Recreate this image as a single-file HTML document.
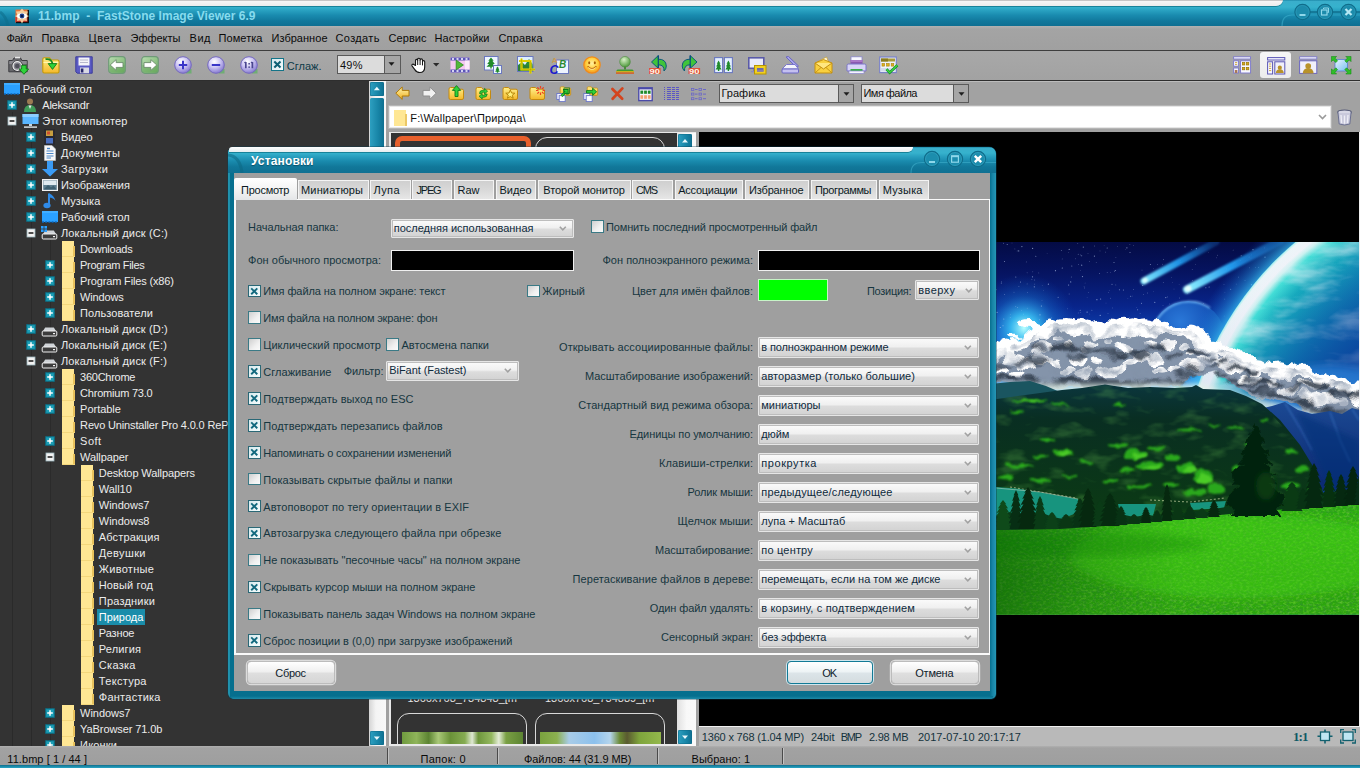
<!DOCTYPE html>
<html lang="ru"><head><meta charset="utf-8"><title>FastStone Image Viewer</title><style>
html,body{margin:0;padding:0}
body{width:1360px;height:768px;overflow:hidden;position:relative;background:#a0a0a0;font-family:'Liberation Sans',sans-serif;font-size:11px}
.t{position:absolute;white-space:pre;line-height:14px;height:14px}
</style></head><body>
<div style="position:absolute;left:0px;top:0px;width:1360px;height:26px;background:linear-gradient(to bottom,#1b86a6 0,#3aaecb 1.2px,#36b2cd 7px,#2aa3c2 10px,#1a8cb0 15px,#11789c 21px,#0f6f92 26px);"></div>
<svg style="position:absolute;left:1270px;top:0px;" width="90" height="26" viewBox="0 0 90 26"><path d="M90 15 H22 Q12 15 12 26" fill="none" stroke="#3fb2cf" stroke-opacity=".55" stroke-width="1.2"/><path d="M90 12 H26" stroke="#0c6482" stroke-opacity=".6" stroke-width="2" fill="none"/></svg>
<div style="position:absolute;left:0px;top:0px;width:1283px;height:6px;background:linear-gradient(to bottom,#c6c6c6 0,#c6c6c6 1px,#f6f6f6 1px,#ececec 100%);border-bottom-right-radius:7px 6px;box-shadow:0 .8px 0 #0e7388;"></div>
<svg style="position:absolute;left:0px;top:6px;" width="30" height="20" viewBox="0 0 30 20"><path d="M0 6 Q6 10 8 20" fill="none" stroke="#0d6e8c" stroke-opacity=".6" stroke-width="3"/></svg>
<svg style="position:absolute;left:14px;top:8px;" width="16" height="16" viewBox="0 0 16 16"><rect x="1.5" y="1.5" width="13" height="13" fill="#e8743a"/><rect x="1.5" y="9" width="13" height="5.5" fill="#d8382a"/><rect x="13.5" y="2" width="1.5" height="13" fill="#111"/><rect x="2" y="13.8" width="13" height="1.4" fill="#111"/><path d="M8 0.5 L10.2 3.3 L14 3.5 L12.6 7 L15 8 L12.6 9.6 L13 13 L9.8 12.6 L8 15.5 L6.2 12.6 L3 13 L3.4 9.6 L1 8 L3.4 7 L2 3.5 L5.8 3.3 Z" fill="#f6d9a8" fill-opacity=".9"/><ellipse cx="8" cy="8" rx="5" ry="2.8" fill="#fff"/><circle cx="8" cy="8" r="2.4" fill="#1d3f8c"/><circle cx="8" cy="8" r="1" fill="#061030"/></svg>
<span class="t" style="left:38.00px;top:8.64px;font-size:12px;color:#86dbee;letter-spacing:0.027px;font-weight:bold;">11.bmp  -  FastStone Image Viewer 6.9</span>
<svg style="position:absolute;left:1290px;top:0px;" width="70" height="26" viewBox="0 0 70 26"><circle cx="12.5" cy="12" r="7.6" fill="#1c8bab" stroke="#0f6c8a" stroke-width="1.2"/><circle cx="12.5" cy="12" r="6.6" fill="none" stroke="#3aaac8" stroke-opacity=".5" stroke-width=".8"/><rect x="9.5" y="14" width="6" height="2" fill="#8fd8ea"/><circle cx="35" cy="12" r="7.6" fill="#1c8bab" stroke="#0f6c8a" stroke-width="1.2"/><circle cx="35" cy="12" r="6.6" fill="none" stroke="#3aaac8" stroke-opacity=".5" stroke-width=".8"/><rect x="31.5" y="10" width="5.5" height="5" fill="none" stroke="#8fd8ea" stroke-width="1.2"/><path d="M33.5 9 V8 H38.5 V12.5 H37.5" fill="none" stroke="#8fd8ea" stroke-width="1"/><circle cx="58.5" cy="12" r="7.6" fill="#1c8bab" stroke="#0f6c8a" stroke-width="1.2"/><circle cx="58.5" cy="12" r="6.6" fill="none" stroke="#3aaac8" stroke-opacity=".5" stroke-width=".8"/><path d="M55.5 9 L61.5 15 M61.5 9 L55.5 15" stroke="#b6e8f4" stroke-width="2.2" fill="none"/></svg>
<div style="position:absolute;left:0px;top:26px;width:1360px;height:23.5px;background:linear-gradient(to bottom,#b2b2b2 0,#a4a4a4 3px,#a0a0a0 100%);"></div>
<span class="t" style="left:6.50px;top:30.89px;font-size:11px;color:#0a0a0a;letter-spacing:-0.349px;">Файл</span>
<span class="t" style="left:41.50px;top:30.89px;font-size:11px;color:#0a0a0a;letter-spacing:0.166px;">Правка</span>
<span class="t" style="left:88.50px;top:30.89px;font-size:11px;color:#0a0a0a;letter-spacing:0.586px;">Цвета</span>
<span class="t" style="left:130.50px;top:30.89px;font-size:11px;color:#0a0a0a;">Эффекты</span>
<span class="t" style="left:189.50px;top:30.89px;font-size:11px;color:#0a0a0a;letter-spacing:0.547px;">Вид</span>
<span class="t" style="left:218.50px;top:30.89px;font-size:11px;color:#0a0a0a;letter-spacing:0.073px;">Пометка</span>
<span class="t" style="left:271.50px;top:30.89px;font-size:11px;color:#0a0a0a;letter-spacing:0.031px;">Избранное</span>
<span class="t" style="left:335.50px;top:30.89px;font-size:11px;color:#0a0a0a;letter-spacing:0.365px;">Создать</span>
<span class="t" style="left:388.50px;top:30.89px;font-size:11px;color:#0a0a0a;letter-spacing:0.066px;">Сервис</span>
<span class="t" style="left:434.50px;top:30.89px;font-size:11px;color:#0a0a0a;letter-spacing:0.133px;">Настройки</span>
<span class="t" style="left:498.50px;top:30.89px;font-size:11px;color:#0a0a0a;letter-spacing:0.141px;">Справка</span>
<div style="position:absolute;left:0px;top:49.5px;width:1360px;height:1.2px;background:#3e3e3e;"></div>
<div style="position:absolute;left:0px;top:50.7px;width:1360px;height:29px;background:linear-gradient(to bottom,#a8a8a8 0,#a2a2a2 100%);"></div>
<div style="position:absolute;left:0px;top:79.5px;width:1360px;height:1.2px;background:#2e2e2e;"></div>
<div style="position:absolute;left:386px;top:80.7px;width:974px;height:1px;background:#bcbcbc;"></div>
<div style="position:absolute;left:0;top:80.7px;width:369px;height:665px;background:#333333;overflow:hidden"><div style="position:absolute;left:0;top:-80.7px"><div style="position:absolute;left:11.5px;top:112px;width:1px;height:640px;background:#2a2a2a;"></div><div style="position:absolute;left:30.5px;top:128px;width:1px;height:640px;background:#2a2a2a;"></div><div style="position:absolute;left:49.5px;top:240px;width:1px;height:520px;background:#2b2b2b;"></div><svg style="position:absolute;left:3.5px;top:83px;" width="16" height="13" viewBox="0 0 16 13"><rect x="0" y="0" width="16" height="11" fill="#2aa0ff"/><rect x="0" y="0" width="16" height="2" fill="#41adff"/><path d="M0 11 H16" stroke="#0d69c0" stroke-width="1.4" stroke-dasharray="2 1.2"/></svg><span class="t" style="left:22.80px;top:82.19px;font-size:11px;color:#ececec;">Рабочий стол</span><svg style="position:absolute;left:6.5px;top:100px;" width="10" height="10" viewBox="0 0 10 10"><rect x=".5" y=".5" width="9" height="9" fill="#14879f" stroke="#0c6b80" stroke-width="1" stroke-dasharray="2 1"/><rect x="1.5" y="1.5" width="7" height="7" fill="#1aa0b8"/><path d="M2.2 5 H7.8 M5 2.2 V7.8" stroke="#fff" stroke-width="1.5"/></svg><svg style="position:absolute;left:23px;top:97px;" width="14" height="16" viewBox="0 0 14 16"><circle cx="7" cy="4.5" r="3" fill="#9b7a52"/><path d="M1 15 Q1 8 7 8 Q13 8 13 15 Z" fill="#3f9c5a"/><path d="M5.5 8.5 L7 12 L8.5 8.5Z" fill="#e8e8e8"/></svg><span class="t" style="left:42.30px;top:98.19px;font-size:11px;color:#ececec;letter-spacing:-0.240px;">Aleksandr</span><svg style="position:absolute;left:6.5px;top:116px;" width="10" height="10" viewBox="0 0 10 10"><rect x="1" y="1" width="8" height="8" fill="#f2f2f2" stroke="#9fb9c0" stroke-width=".8"/><path d="M2.6 5 H7.4" stroke="#222" stroke-width="1.6"/></svg><svg style="position:absolute;left:22px;top:113px;" width="17" height="16" viewBox="0 0 17 16"><rect x="0.5" y="1" width="16" height="10" fill="#5ab6ff"/><rect x="0.5" y="1" width="16" height="3" fill="#8ccdff"/><rect x="7" y="11" width="3" height="2" fill="#c8d4dc"/><rect x="2" y="13.4" width="13" height="1.4" fill="#dfe6ea"/></svg><span class="t" style="left:42.30px;top:114.19px;font-size:11px;color:#ececec;letter-spacing:0.226px;">Этот компьютер</span><svg style="position:absolute;left:25.5px;top:132px;" width="10" height="10" viewBox="0 0 10 10"><rect x=".5" y=".5" width="9" height="9" fill="#14879f" stroke="#0c6b80" stroke-width="1" stroke-dasharray="2 1"/><rect x="1.5" y="1.5" width="7" height="7" fill="#1aa0b8"/><path d="M2.2 5 H7.8 M5 2.2 V7.8" stroke="#fff" stroke-width="1.5"/></svg><svg style="position:absolute;left:44px;top:129px;" width="11" height="16" viewBox="0 0 11 16"><rect x="0" y="0" width="11" height="16" fill="#2a2a30"/><rect x="2" y="1.5" width="7" height="5.5" fill="#c8a040"/><rect x="2" y="9" width="7" height="5.5" fill="#4a70c0"/><rect x="3" y="2.5" width="3" height="3" fill="#d05030"/></svg><span class="t" style="left:60.90px;top:130.19px;font-size:11px;color:#ececec;letter-spacing:-0.085px;">Видео</span><svg style="position:absolute;left:25.5px;top:148px;" width="10" height="10" viewBox="0 0 10 10"><rect x=".5" y=".5" width="9" height="9" fill="#14879f" stroke="#0c6b80" stroke-width="1" stroke-dasharray="2 1"/><rect x="1.5" y="1.5" width="7" height="7" fill="#1aa0b8"/><path d="M2.2 5 H7.8 M5 2.2 V7.8" stroke="#fff" stroke-width="1.5"/></svg><svg style="position:absolute;left:43.5px;top:145px;" width="12" height="16" viewBox="0 0 12 16"><path d="M0.5 0.5 H8 L11.5 4 V15.5 H0.5Z" fill="#f8f8f8" stroke="#c8ccd0" stroke-width=".6"/><path d="M2.5 6 H9.5 M2.5 8.5 H9.5 M2.5 11 H9.5 M2.5 13 H7" stroke="#4a86c8" stroke-width="1.2"/><path d="M3 3.5 H6" stroke="#4a86c8" stroke-width="1.4"/></svg><span class="t" style="left:60.90px;top:146.19px;font-size:11px;color:#ececec;letter-spacing:0.275px;">Документы</span><svg style="position:absolute;left:25.5px;top:164px;" width="10" height="10" viewBox="0 0 10 10"><rect x=".5" y=".5" width="9" height="9" fill="#14879f" stroke="#0c6b80" stroke-width="1" stroke-dasharray="2 1"/><rect x="1.5" y="1.5" width="7" height="7" fill="#1aa0b8"/><path d="M2.2 5 H7.8 M5 2.2 V7.8" stroke="#fff" stroke-width="1.5"/></svg><svg style="position:absolute;left:41.5px;top:161px;" width="16" height="16" viewBox="0 0 16 16"><path d="M5 0 H11 V8 H16 L8 15.5 L0 8 H5Z" fill="#3a9bf4"/></svg><span class="t" style="left:60.90px;top:162.19px;font-size:11px;color:#ececec;letter-spacing:0.388px;">Загрузки</span><svg style="position:absolute;left:25.5px;top:180px;" width="10" height="10" viewBox="0 0 10 10"><rect x=".5" y=".5" width="9" height="9" fill="#14879f" stroke="#0c6b80" stroke-width="1" stroke-dasharray="2 1"/><rect x="1.5" y="1.5" width="7" height="7" fill="#1aa0b8"/><path d="M2.2 5 H7.8 M5 2.2 V7.8" stroke="#fff" stroke-width="1.5"/></svg><svg style="position:absolute;left:41.5px;top:179px;" width="16" height="12" viewBox="0 0 16 12"><rect x=".5" y=".5" width="15" height="11" fill="#5e7f90" stroke="#f2f2f2" stroke-width="1.4"/><rect x="1.5" y="1.5" width="13" height="4.5" fill="#dfeaf0"/><path d="M1.5 10.5 L6 6 L9 8.5 L11.5 6.5 L14.5 10.5Z" fill="#3d5f70"/></svg><span class="t" style="left:60.90px;top:178.19px;font-size:11px;color:#ececec;letter-spacing:-0.014px;">Изображения</span><svg style="position:absolute;left:25.5px;top:196px;" width="10" height="10" viewBox="0 0 10 10"><rect x=".5" y=".5" width="9" height="9" fill="#14879f" stroke="#0c6b80" stroke-width="1" stroke-dasharray="2 1"/><rect x="1.5" y="1.5" width="7" height="7" fill="#1aa0b8"/><path d="M2.2 5 H7.8 M5 2.2 V7.8" stroke="#fff" stroke-width="1.5"/></svg><svg style="position:absolute;left:43px;top:193px;" width="14" height="16" viewBox="0 0 14 16"><path d="M6 0.5 V12" stroke="#2f8be8" stroke-width="2"/><path d="M6 0.5 Q11 2 12.5 8 Q10.5 4.5 6 4.5Z" fill="#2f8be8"/><ellipse cx="4" cy="12.5" rx="3.6" ry="2.8" fill="#2f8be8"/></svg><span class="t" style="left:60.90px;top:194.19px;font-size:11px;color:#ececec;letter-spacing:0.096px;">Музыка</span><svg style="position:absolute;left:25.5px;top:212px;" width="10" height="10" viewBox="0 0 10 10"><rect x=".5" y=".5" width="9" height="9" fill="#14879f" stroke="#0c6b80" stroke-width="1" stroke-dasharray="2 1"/><rect x="1.5" y="1.5" width="7" height="7" fill="#1aa0b8"/><path d="M2.2 5 H7.8 M5 2.2 V7.8" stroke="#fff" stroke-width="1.5"/></svg><svg style="position:absolute;left:41.5px;top:211px;" width="16" height="13" viewBox="0 0 16 13"><rect x="0" y="0" width="16" height="11" fill="#2aa0ff"/><rect x="0" y="0" width="16" height="2" fill="#41adff"/><path d="M0 11 H16" stroke="#0d69c0" stroke-width="1.4" stroke-dasharray="2 1.2"/></svg><span class="t" style="left:60.90px;top:210.19px;font-size:11px;color:#ececec;letter-spacing:-0.024px;">Рабочий стол</span><svg style="position:absolute;left:25.5px;top:228px;" width="10" height="10" viewBox="0 0 10 10"><rect x="1" y="1" width="8" height="8" fill="#f2f2f2" stroke="#9fb9c0" stroke-width=".8"/><path d="M2.6 5 H7.4" stroke="#222" stroke-width="1.6"/></svg><svg style="position:absolute;left:41px;top:226px;" width="17" height="14" viewBox="0 0 17 14"><path d="M2 8 L4.2 4.6 H12.8 L15 8Z" fill="#cfd3d7"/><rect x="1.2" y="8" width="14.6" height="5" rx="1" fill="#3c3c3c" stroke="#f0f0f0" stroke-width="1"/><rect x="12" y="10" width="2" height="1.2" fill="#f4f4f4"/><rect x="0" y="0" width="2.6" height="2.6" fill="#2aa0ff"/><rect x="3.4" y="0" width="2.6" height="2.6" fill="#2aa0ff"/><rect x="0" y="3.4" width="2.6" height="2.6" fill="#2aa0ff"/><rect x="3.4" y="3.4" width="2.6" height="2.6" fill="#2aa0ff"/></svg><span class="t" style="left:60.90px;top:226.19px;font-size:11px;color:#ececec;letter-spacing:0.155px;">Локальный диск (C:)</span><div style="position:absolute;left:61.8px;top:241px;width:11.8px;height:16px;background:#ffe794;"></div><div style="position:absolute;left:73.39999999999999px;top:246px;width:1.4px;height:11px;background:#e9c25c;"></div><div style="position:absolute;left:61.8px;top:256px;width:13px;height:1px;background:#f4d77c;"></div><span class="t" style="left:80.10px;top:242.19px;font-size:11px;color:#ececec;letter-spacing:-0.228px;">Downloads</span><svg style="position:absolute;left:44.7px;top:260px;" width="10" height="10" viewBox="0 0 10 10"><rect x=".5" y=".5" width="9" height="9" fill="#14879f" stroke="#0c6b80" stroke-width="1" stroke-dasharray="2 1"/><rect x="1.5" y="1.5" width="7" height="7" fill="#1aa0b8"/><path d="M2.2 5 H7.8 M5 2.2 V7.8" stroke="#fff" stroke-width="1.5"/></svg><div style="position:absolute;left:61.8px;top:257px;width:11.8px;height:16px;background:#ffe794;"></div><div style="position:absolute;left:73.39999999999999px;top:262px;width:1.4px;height:11px;background:#e9c25c;"></div><div style="position:absolute;left:61.8px;top:272px;width:13px;height:1px;background:#f4d77c;"></div><span class="t" style="left:80.10px;top:258.19px;font-size:11px;color:#ececec;letter-spacing:-0.322px;">Program Files</span><svg style="position:absolute;left:44.7px;top:276px;" width="10" height="10" viewBox="0 0 10 10"><rect x=".5" y=".5" width="9" height="9" fill="#14879f" stroke="#0c6b80" stroke-width="1" stroke-dasharray="2 1"/><rect x="1.5" y="1.5" width="7" height="7" fill="#1aa0b8"/><path d="M2.2 5 H7.8 M5 2.2 V7.8" stroke="#fff" stroke-width="1.5"/></svg><div style="position:absolute;left:61.8px;top:273px;width:11.8px;height:16px;background:#ffe794;"></div><div style="position:absolute;left:73.39999999999999px;top:278px;width:1.4px;height:11px;background:#e9c25c;"></div><div style="position:absolute;left:61.8px;top:288px;width:13px;height:1px;background:#f4d77c;"></div><span class="t" style="left:80.10px;top:274.19px;font-size:11px;color:#ececec;letter-spacing:-0.154px;">Program Files (x86)</span><svg style="position:absolute;left:44.7px;top:292px;" width="10" height="10" viewBox="0 0 10 10"><rect x=".5" y=".5" width="9" height="9" fill="#14879f" stroke="#0c6b80" stroke-width="1" stroke-dasharray="2 1"/><rect x="1.5" y="1.5" width="7" height="7" fill="#1aa0b8"/><path d="M2.2 5 H7.8 M5 2.2 V7.8" stroke="#fff" stroke-width="1.5"/></svg><div style="position:absolute;left:61.8px;top:289px;width:11.8px;height:16px;background:#ffe794;"></div><div style="position:absolute;left:73.39999999999999px;top:294px;width:1.4px;height:11px;background:#e9c25c;"></div><div style="position:absolute;left:61.8px;top:304px;width:13px;height:1px;background:#f4d77c;"></div><span class="t" style="left:80.10px;top:290.19px;font-size:11px;color:#ececec;letter-spacing:-0.154px;">Windows</span><svg style="position:absolute;left:44.7px;top:308px;" width="10" height="10" viewBox="0 0 10 10"><rect x=".5" y=".5" width="9" height="9" fill="#14879f" stroke="#0c6b80" stroke-width="1" stroke-dasharray="2 1"/><rect x="1.5" y="1.5" width="7" height="7" fill="#1aa0b8"/><path d="M2.2 5 H7.8 M5 2.2 V7.8" stroke="#fff" stroke-width="1.5"/></svg><div style="position:absolute;left:61.8px;top:305px;width:11.8px;height:16px;background:#ffe794;"></div><div style="position:absolute;left:73.39999999999999px;top:310px;width:1.4px;height:11px;background:#e9c25c;"></div><div style="position:absolute;left:61.8px;top:320px;width:13px;height:1px;background:#f4d77c;"></div><span class="t" style="left:80.10px;top:306.19px;font-size:11px;color:#ececec;letter-spacing:0.082px;">Пользователи</span><svg style="position:absolute;left:25.5px;top:324px;" width="10" height="10" viewBox="0 0 10 10"><rect x=".5" y=".5" width="9" height="9" fill="#14879f" stroke="#0c6b80" stroke-width="1" stroke-dasharray="2 1"/><rect x="1.5" y="1.5" width="7" height="7" fill="#1aa0b8"/><path d="M2.2 5 H7.8 M5 2.2 V7.8" stroke="#fff" stroke-width="1.5"/></svg><svg style="position:absolute;left:41px;top:323px;" width="17" height="14" viewBox="0 0 17 14"><path d="M2 8 L4.2 4.6 H12.8 L15 8Z" fill="#cfd3d7"/><rect x="1.2" y="8" width="14.6" height="5" rx="1" fill="#3c3c3c" stroke="#f0f0f0" stroke-width="1"/><rect x="12" y="10" width="2" height="1.2" fill="#f4f4f4"/></svg><span class="t" style="left:60.90px;top:322.19px;font-size:11px;color:#ececec;letter-spacing:0.155px;">Локальный диск (D:)</span><svg style="position:absolute;left:25.5px;top:340px;" width="10" height="10" viewBox="0 0 10 10"><rect x=".5" y=".5" width="9" height="9" fill="#14879f" stroke="#0c6b80" stroke-width="1" stroke-dasharray="2 1"/><rect x="1.5" y="1.5" width="7" height="7" fill="#1aa0b8"/><path d="M2.2 5 H7.8 M5 2.2 V7.8" stroke="#fff" stroke-width="1.5"/></svg><svg style="position:absolute;left:41px;top:339px;" width="17" height="14" viewBox="0 0 17 14"><path d="M2 8 L4.2 4.6 H12.8 L15 8Z" fill="#cfd3d7"/><rect x="1.2" y="8" width="14.6" height="5" rx="1" fill="#3c3c3c" stroke="#f0f0f0" stroke-width="1"/><rect x="12" y="10" width="2" height="1.2" fill="#f4f4f4"/></svg><span class="t" style="left:60.90px;top:338.19px;font-size:11px;color:#ececec;letter-spacing:0.139px;">Локальный диск (E:)</span><svg style="position:absolute;left:25.5px;top:356px;" width="10" height="10" viewBox="0 0 10 10"><rect x="1" y="1" width="8" height="8" fill="#f2f2f2" stroke="#9fb9c0" stroke-width=".8"/><path d="M2.6 5 H7.4" stroke="#222" stroke-width="1.6"/></svg><svg style="position:absolute;left:41px;top:355px;" width="17" height="14" viewBox="0 0 17 14"><path d="M2 8 L4.2 4.6 H12.8 L15 8Z" fill="#cfd3d7"/><rect x="1.2" y="8" width="14.6" height="5" rx="1" fill="#3c3c3c" stroke="#f0f0f0" stroke-width="1"/><rect x="12" y="10" width="2" height="1.2" fill="#f4f4f4"/></svg><span class="t" style="left:60.90px;top:354.19px;font-size:11px;color:#ececec;letter-spacing:0.174px;">Локальный диск (F:)</span><svg style="position:absolute;left:44.7px;top:372px;" width="10" height="10" viewBox="0 0 10 10"><rect x=".5" y=".5" width="9" height="9" fill="#14879f" stroke="#0c6b80" stroke-width="1" stroke-dasharray="2 1"/><rect x="1.5" y="1.5" width="7" height="7" fill="#1aa0b8"/><path d="M2.2 5 H7.8 M5 2.2 V7.8" stroke="#fff" stroke-width="1.5"/></svg><div style="position:absolute;left:61.8px;top:369px;width:11.8px;height:16px;background:#ffe794;"></div><div style="position:absolute;left:73.39999999999999px;top:374px;width:1.4px;height:11px;background:#e9c25c;"></div><div style="position:absolute;left:61.8px;top:384px;width:13px;height:1px;background:#f4d77c;"></div><span class="t" style="left:80.10px;top:370.19px;font-size:11px;color:#ececec;letter-spacing:-0.261px;">360Chrome</span><svg style="position:absolute;left:44.7px;top:388px;" width="10" height="10" viewBox="0 0 10 10"><rect x=".5" y=".5" width="9" height="9" fill="#14879f" stroke="#0c6b80" stroke-width="1" stroke-dasharray="2 1"/><rect x="1.5" y="1.5" width="7" height="7" fill="#1aa0b8"/><path d="M2.2 5 H7.8 M5 2.2 V7.8" stroke="#fff" stroke-width="1.5"/></svg><div style="position:absolute;left:61.8px;top:385px;width:11.8px;height:16px;background:#ffe794;"></div><div style="position:absolute;left:73.39999999999999px;top:390px;width:1.4px;height:11px;background:#e9c25c;"></div><div style="position:absolute;left:61.8px;top:400px;width:13px;height:1px;background:#f4d77c;"></div><span class="t" style="left:80.10px;top:386.19px;font-size:11px;color:#ececec;letter-spacing:-0.217px;">Chromium 73.0</span><svg style="position:absolute;left:44.7px;top:404px;" width="10" height="10" viewBox="0 0 10 10"><rect x=".5" y=".5" width="9" height="9" fill="#14879f" stroke="#0c6b80" stroke-width="1" stroke-dasharray="2 1"/><rect x="1.5" y="1.5" width="7" height="7" fill="#1aa0b8"/><path d="M2.2 5 H7.8 M5 2.2 V7.8" stroke="#fff" stroke-width="1.5"/></svg><div style="position:absolute;left:61.8px;top:401px;width:11.8px;height:16px;background:#ffe794;"></div><div style="position:absolute;left:73.39999999999999px;top:406px;width:1.4px;height:11px;background:#e9c25c;"></div><div style="position:absolute;left:61.8px;top:416px;width:13px;height:1px;background:#f4d77c;"></div><span class="t" style="left:80.10px;top:402.19px;font-size:11px;color:#ececec;letter-spacing:-0.026px;">Portable</span><div style="position:absolute;left:61.8px;top:417px;width:11.8px;height:16px;background:#ffe794;"></div><div style="position:absolute;left:73.39999999999999px;top:422px;width:1.4px;height:11px;background:#e9c25c;"></div><div style="position:absolute;left:61.8px;top:432px;width:13px;height:1px;background:#f4d77c;"></div><span class="t" style="left:80.10px;top:418.19px;font-size:11px;color:#ececec;letter-spacing:-0.154px;">Revo Uninstaller Pro 4.0.0 ReP</span><svg style="position:absolute;left:44.7px;top:436px;" width="10" height="10" viewBox="0 0 10 10"><rect x=".5" y=".5" width="9" height="9" fill="#14879f" stroke="#0c6b80" stroke-width="1" stroke-dasharray="2 1"/><rect x="1.5" y="1.5" width="7" height="7" fill="#1aa0b8"/><path d="M2.2 5 H7.8 M5 2.2 V7.8" stroke="#fff" stroke-width="1.5"/></svg><div style="position:absolute;left:61.8px;top:433px;width:11.8px;height:16px;background:#ffe794;"></div><div style="position:absolute;left:73.39999999999999px;top:438px;width:1.4px;height:11px;background:#e9c25c;"></div><div style="position:absolute;left:61.8px;top:448px;width:13px;height:1px;background:#f4d77c;"></div><span class="t" style="left:80.10px;top:434.19px;font-size:11px;color:#ececec;letter-spacing:0.474px;">Soft</span><svg style="position:absolute;left:44.7px;top:452px;" width="10" height="10" viewBox="0 0 10 10"><rect x="1" y="1" width="8" height="8" fill="#f2f2f2" stroke="#9fb9c0" stroke-width=".8"/><path d="M2.6 5 H7.4" stroke="#222" stroke-width="1.6"/></svg><div style="position:absolute;left:61.8px;top:449px;width:11.8px;height:16px;background:#ffe794;"></div><div style="position:absolute;left:73.39999999999999px;top:454px;width:1.4px;height:11px;background:#e9c25c;"></div><div style="position:absolute;left:61.8px;top:464px;width:13px;height:1px;background:#f4d77c;"></div><span class="t" style="left:80.10px;top:450.19px;font-size:11px;color:#ececec;letter-spacing:-0.091px;">Wallpaper</span><div style="position:absolute;left:80.8px;top:465px;width:11.8px;height:16px;background:#ffe794;"></div><div style="position:absolute;left:92.39999999999999px;top:470px;width:1.4px;height:11px;background:#e9c25c;"></div><div style="position:absolute;left:80.8px;top:480px;width:13px;height:1px;background:#f4d77c;"></div><span class="t" style="left:98.80px;top:466.19px;font-size:11px;color:#ececec;letter-spacing:-0.108px;">Desktop Wallpapers</span><div style="position:absolute;left:80.8px;top:481px;width:11.8px;height:16px;background:#ffe794;"></div><div style="position:absolute;left:92.39999999999999px;top:486px;width:1.4px;height:11px;background:#e9c25c;"></div><div style="position:absolute;left:80.8px;top:496px;width:13px;height:1px;background:#f4d77c;"></div><span class="t" style="left:98.80px;top:482.19px;font-size:11px;color:#ececec;letter-spacing:-0.044px;">Wall10</span><div style="position:absolute;left:80.8px;top:497px;width:11.8px;height:16px;background:#ffe794;"></div><div style="position:absolute;left:92.39999999999999px;top:502px;width:1.4px;height:11px;background:#e9c25c;"></div><div style="position:absolute;left:80.8px;top:512px;width:13px;height:1px;background:#f4d77c;"></div><span class="t" style="left:98.80px;top:498.19px;font-size:11px;color:#ececec;letter-spacing:-0.007px;">Windows7</span><div style="position:absolute;left:80.8px;top:513px;width:11.8px;height:16px;background:#ffe794;"></div><div style="position:absolute;left:92.39999999999999px;top:518px;width:1.4px;height:11px;background:#e9c25c;"></div><div style="position:absolute;left:80.8px;top:528px;width:13px;height:1px;background:#f4d77c;"></div><span class="t" style="left:98.80px;top:514.19px;font-size:11px;color:#ececec;letter-spacing:-0.007px;">Windows8</span><div style="position:absolute;left:80.8px;top:529px;width:11.8px;height:16px;background:#ffe794;"></div><div style="position:absolute;left:92.39999999999999px;top:534px;width:1.4px;height:11px;background:#e9c25c;"></div><div style="position:absolute;left:80.8px;top:544px;width:13px;height:1px;background:#f4d77c;"></div><span class="t" style="left:98.80px;top:530.19px;font-size:11px;color:#ececec;letter-spacing:0.132px;">Абстракция</span><div style="position:absolute;left:80.8px;top:545px;width:11.8px;height:16px;background:#ffe794;"></div><div style="position:absolute;left:92.39999999999999px;top:550px;width:1.4px;height:11px;background:#e9c25c;"></div><div style="position:absolute;left:80.8px;top:560px;width:13px;height:1px;background:#f4d77c;"></div><span class="t" style="left:98.80px;top:546.19px;font-size:11px;color:#ececec;letter-spacing:0.374px;">Девушки</span><div style="position:absolute;left:80.8px;top:561px;width:11.8px;height:16px;background:#ffe794;"></div><div style="position:absolute;left:92.39999999999999px;top:566px;width:1.4px;height:11px;background:#e9c25c;"></div><div style="position:absolute;left:80.8px;top:576px;width:13px;height:1px;background:#f4d77c;"></div><span class="t" style="left:98.80px;top:562.19px;font-size:11px;color:#ececec;letter-spacing:0.279px;">Животные</span><div style="position:absolute;left:80.8px;top:577px;width:11.8px;height:16px;background:#ffe794;"></div><div style="position:absolute;left:92.39999999999999px;top:582px;width:1.4px;height:11px;background:#e9c25c;"></div><div style="position:absolute;left:80.8px;top:592px;width:13px;height:1px;background:#f4d77c;"></div><span class="t" style="left:98.80px;top:578.19px;font-size:11px;color:#ececec;letter-spacing:0.115px;">Новый год</span><div style="position:absolute;left:80.8px;top:593px;width:11.8px;height:16px;background:#ffe794;"></div><div style="position:absolute;left:92.39999999999999px;top:598px;width:1.4px;height:11px;background:#e9c25c;"></div><div style="position:absolute;left:80.8px;top:608px;width:13px;height:1px;background:#f4d77c;"></div><span class="t" style="left:98.80px;top:594.19px;font-size:11px;color:#ececec;letter-spacing:0.197px;">Праздники</span><div style="position:absolute;left:97px;top:609px;width:48px;height:16px;background:#1a8daa;"></div><div style="position:absolute;left:80.8px;top:609px;width:11.8px;height:16px;background:#ffe794;"></div><div style="position:absolute;left:92.39999999999999px;top:614px;width:1.4px;height:11px;background:#e9c25c;"></div><div style="position:absolute;left:80.8px;top:624px;width:13px;height:1px;background:#f4d77c;"></div><span class="t" style="left:98.80px;top:610.19px;font-size:11px;color:#ffffff;letter-spacing:-0.034px;">Природа</span><div style="position:absolute;left:80.8px;top:625px;width:11.8px;height:16px;background:#ffe794;"></div><div style="position:absolute;left:92.39999999999999px;top:630px;width:1.4px;height:11px;background:#e9c25c;"></div><div style="position:absolute;left:80.8px;top:640px;width:13px;height:1px;background:#f4d77c;"></div><span class="t" style="left:98.80px;top:626.19px;font-size:11px;color:#ececec;letter-spacing:-0.126px;">Разное</span><div style="position:absolute;left:80.8px;top:641px;width:11.8px;height:16px;background:#ffe794;"></div><div style="position:absolute;left:92.39999999999999px;top:646px;width:1.4px;height:11px;background:#e9c25c;"></div><div style="position:absolute;left:80.8px;top:656px;width:13px;height:1px;background:#f4d77c;"></div><span class="t" style="left:98.80px;top:642.19px;font-size:11px;color:#ececec;letter-spacing:0.134px;">Религия</span><div style="position:absolute;left:80.8px;top:657px;width:11.8px;height:16px;background:#ffe794;"></div><div style="position:absolute;left:92.39999999999999px;top:662px;width:1.4px;height:11px;background:#e9c25c;"></div><div style="position:absolute;left:80.8px;top:672px;width:13px;height:1px;background:#f4d77c;"></div><span class="t" style="left:98.80px;top:658.19px;font-size:11px;color:#ececec;letter-spacing:0.296px;">Сказка</span><div style="position:absolute;left:80.8px;top:673px;width:11.8px;height:16px;background:#ffe794;"></div><div style="position:absolute;left:92.39999999999999px;top:678px;width:1.4px;height:11px;background:#e9c25c;"></div><div style="position:absolute;left:80.8px;top:688px;width:13px;height:1px;background:#f4d77c;"></div><span class="t" style="left:98.80px;top:674.19px;font-size:11px;color:#ececec;letter-spacing:0.323px;">Текстура</span><div style="position:absolute;left:80.8px;top:689px;width:11.8px;height:16px;background:#ffe794;"></div><div style="position:absolute;left:92.39999999999999px;top:694px;width:1.4px;height:11px;background:#e9c25c;"></div><div style="position:absolute;left:80.8px;top:704px;width:13px;height:1px;background:#f4d77c;"></div><span class="t" style="left:98.80px;top:690.19px;font-size:11px;color:#ececec;letter-spacing:0.250px;">Фантастика</span><svg style="position:absolute;left:44.7px;top:708px;" width="10" height="10" viewBox="0 0 10 10"><rect x=".5" y=".5" width="9" height="9" fill="#14879f" stroke="#0c6b80" stroke-width="1" stroke-dasharray="2 1"/><rect x="1.5" y="1.5" width="7" height="7" fill="#1aa0b8"/><path d="M2.2 5 H7.8 M5 2.2 V7.8" stroke="#fff" stroke-width="1.5"/></svg><div style="position:absolute;left:61.8px;top:705px;width:11.8px;height:16px;background:#ffe794;"></div><div style="position:absolute;left:73.39999999999999px;top:710px;width:1.4px;height:11px;background:#e9c25c;"></div><div style="position:absolute;left:61.8px;top:720px;width:13px;height:1px;background:#f4d77c;"></div><span class="t" style="left:80.10px;top:706.19px;font-size:11px;color:#ececec;letter-spacing:-0.050px;">Windows7</span><svg style="position:absolute;left:44.7px;top:724px;" width="10" height="10" viewBox="0 0 10 10"><rect x=".5" y=".5" width="9" height="9" fill="#14879f" stroke="#0c6b80" stroke-width="1" stroke-dasharray="2 1"/><rect x="1.5" y="1.5" width="7" height="7" fill="#1aa0b8"/><path d="M2.2 5 H7.8 M5 2.2 V7.8" stroke="#fff" stroke-width="1.5"/></svg><div style="position:absolute;left:61.8px;top:721px;width:11.8px;height:16px;background:#ffe794;"></div><div style="position:absolute;left:73.39999999999999px;top:726px;width:1.4px;height:11px;background:#e9c25c;"></div><div style="position:absolute;left:61.8px;top:736px;width:13px;height:1px;background:#f4d77c;"></div><span class="t" style="left:80.10px;top:722.19px;font-size:11px;color:#ececec;letter-spacing:-0.084px;">YaBrowser 71.0b</span><svg style="position:absolute;left:44.7px;top:740px;" width="10" height="10" viewBox="0 0 10 10"><rect x=".5" y=".5" width="9" height="9" fill="#14879f" stroke="#0c6b80" stroke-width="1" stroke-dasharray="2 1"/><rect x="1.5" y="1.5" width="7" height="7" fill="#1aa0b8"/><path d="M2.2 5 H7.8 M5 2.2 V7.8" stroke="#fff" stroke-width="1.5"/></svg><div style="position:absolute;left:61.8px;top:737px;width:11.8px;height:16px;background:#ffe794;"></div><div style="position:absolute;left:73.39999999999999px;top:742px;width:1.4px;height:11px;background:#e9c25c;"></div><div style="position:absolute;left:61.8px;top:752px;width:13px;height:1px;background:#f4d77c;"></div><span class="t" style="left:80.10px;top:738.19px;font-size:11px;color:#ececec;letter-spacing:0.160px;">Иконки</span></div></div>
<div style="position:absolute;left:369px;top:80.7px;width:17px;height:665px;background:linear-gradient(to right,#d4d4d4 0,#f4f4f4 40%,#f8f8f8 100%);"></div>
<div style="position:absolute;left:370.3px;top:82px;width:13.7px;height:13.5px;background:linear-gradient(to right,#2d9fc0 0,#1784a6 60%,#0f6f90 100%);border-radius:1.5px;box-shadow:0 0 0 .5px #0f6a88 inset;"><svg style="position:absolute;left:0px;top:0px;" width="13.7" height="13.5" viewBox="0 0 13.7 13.5"><path d="M3.8499999999999996 8.25 L6.85 4.75 L9.85 8.25Z" fill="#e8f6fa"/></svg></div>
<div style="position:absolute;left:370.3px;top:98px;width:13.7px;height:600px;background:linear-gradient(to right,#2d9fc0 0,#1784a6 60%,#0f6f90 100%);border-radius:1.5px;"></div>
<div style="position:absolute;left:370.3px;top:731px;width:13.7px;height:14px;background:linear-gradient(to right,#2d9fc0 0,#1784a6 60%,#0f6f90 100%);border-radius:1.5px;box-shadow:0 0 0 .5px #0f6a88 inset;"><svg style="position:absolute;left:0px;top:0px;" width="13.7" height="14" viewBox="0 0 13.7 14"><path d="M3.8499999999999996 5.5 L6.85 9.0 L9.85 5.5Z" fill="#e8f6fa"/></svg></div>
<div style="position:absolute;left:386px;top:81.7px;width:974px;height:50px;background:#a2a2a2;"></div>
<div style="position:absolute;left:390px;top:106.8px;width:939.5px;height:20px;background:#fff;box-shadow:0 0 0 1px #e6e6e6, 0 0 0 1.8px #bababa;"></div>
<div style="position:absolute;left:394px;top:109.5px;width:11.5px;height:16px;background:#ffe794;"></div><div style="position:absolute;left:405.3px;top:114px;width:1.5px;height:11.5px;background:#ecc866;"></div>
<span class="t" style="left:410.30px;top:110.69px;font-size:11px;color:#101010;letter-spacing:0.122px;">F:\Wallpaper\Природа\</span>
<svg style="position:absolute;left:1318px;top:114px;" width="9" height="6" viewBox="0 0 9 6"><path d="M1 1 L4.5 4.5 L8 1" fill="none" stroke="#9a9a9a" stroke-width="1.6"/></svg>
<svg style="position:absolute;left:1336px;top:109px;" width="17" height="17" viewBox="0 0 17 17"><ellipse cx="8.5" cy="3.2" rx="6.8" ry="2.2" fill="#d8d8e6" stroke="#555a78" stroke-width="1.1"/><path d="M2 4 L3.2 15 Q8.5 17 13.8 15 L15 4" fill="#c9c9dc" stroke="#6a6f90" stroke-width="1"/><path d="M5 6 L5.6 14 M8.5 6.5 V14.8 M12 6 L11.4 14" stroke="#eeeef6" stroke-width="1.3"/></svg>
<div style="position:absolute;left:719px;top:84.2px;width:135px;height:18.6px;background:#dcdcdc;border:1px solid #5a5a5a;box-sizing:border-box;"></div><div style="position:absolute;left:838px;top:85.2px;width:15px;height:16.6px;background:#a6a6a6;border-left:1px solid #5a5a5a;box-sizing:border-box;"></div><svg style="position:absolute;left:842.5px;top:92px;" width="7" height="4" viewBox="0 0 7 4"><path d="M.5 .3 H6.5 L3.5 3.7Z" fill="#1e1e1e"/></svg><span class="t" style="left:721.50px;top:86.49px;font-size:11px;color:#101010;letter-spacing:0.008px;">Графика</span>
<div style="position:absolute;left:861px;top:84.2px;width:108px;height:18.6px;background:#dcdcdc;border:1px solid #5a5a5a;box-sizing:border-box;"></div><div style="position:absolute;left:953px;top:85.2px;width:15px;height:16.6px;background:#a6a6a6;border-left:1px solid #5a5a5a;box-sizing:border-box;"></div><svg style="position:absolute;left:957.5px;top:92px;" width="7" height="4" viewBox="0 0 7 4"><path d="M.5 .3 H6.5 L3.5 3.7Z" fill="#1e1e1e"/></svg><span class="t" style="left:863.50px;top:86.49px;font-size:11px;color:#101010;letter-spacing:-0.543px;">Имя файла</span>
<div style="position:absolute;left:389px;top:131.6px;width:307px;height:614px;background:#e9e9e9;"></div>
<div style="position:absolute;left:391px;top:133.2px;width:286px;height:611px;background:#333333;overflow:hidden;"><div style="position:absolute;left:4px;top:2.5px;width:136px;height:60px;border:5px solid #e8602c;border-radius:7px;box-sizing:border-box;"></div><div style="position:absolute;left:144px;top:3.5px;width:130px;height:60px;border:1px solid #d8d8d8;border-radius:12px;box-sizing:border-box;"></div><span class="t" style="left:16.50px;top:557.99px;font-size:11px;color:#e6e6e6;">1366x768_734848_[m</span><span class="t" style="left:153.90px;top:557.99px;font-size:11px;color:#e6e6e6;letter-spacing:0.007px;">1366x768_734889_[m</span><div style="position:absolute;left:6px;top:579.8px;width:130px;height:60px;border:1px solid #d8d8d8;border-radius:12px;box-sizing:border-box;"></div><div style="position:absolute;left:144px;top:579.8px;width:130px;height:60px;border:1px solid #d8d8d8;border-radius:12px;box-sizing:border-box;"></div><div style="position:absolute;left:11px;top:598.8px;width:120.5px;height:20px;background:linear-gradient(to right,#6f9a3e 0,#8fb45a 12%,#5c8432 22%,#a9c878 30%,#6a9238 40%,#86ac52 52%,#dfe8d4 58%,#6e963c 63%,#94b860 74%,#e4ecd8 80%,#7aa044 86%,#5c8432 100%);"></div><div style="position:absolute;left:149px;top:598.8px;width:120.5px;height:20px;background:linear-gradient(to right,#7aa23e 0,#8cb050 14%,#a8cce8 24%,#8cc0ec 45%,#b4d4ec 58%,#6a8a34 66%,#5a5a30 72%,#7ea43c 82%,#94b84c 100%);"></div></div>
<div style="position:absolute;left:677px;top:132.5px;width:18.5px;height:613px;background:linear-gradient(to right,#e0e0e0 0,#f8f8f8 50%,#fafafa 100%);"></div>
<div style="position:absolute;left:678.3px;top:133.5px;width:14px;height:14px;background:linear-gradient(to right,#2d9fc0 0,#1784a6 60%,#0f6f90 100%);border-radius:1.5px;box-shadow:0 0 0 .5px #0f6a88 inset;"><svg style="position:absolute;left:0px;top:0px;" width="14" height="14" viewBox="0 0 14 14"><path d="M4.0 8.5 L7.0 5.0 L10.0 8.5Z" fill="#e8f6fa"/></svg></div>
<div style="position:absolute;left:678.3px;top:729.5px;width:14px;height:14px;background:linear-gradient(to right,#2d9fc0 0,#1784a6 60%,#0f6f90 100%);border-radius:1.5px;box-shadow:0 0 0 .5px #0f6a88 inset;"><svg style="position:absolute;left:0px;top:0px;" width="14" height="14" viewBox="0 0 14 14"><path d="M4.0 5.5 L7.0 9.0 L10.0 5.5Z" fill="#e8f6fa"/></svg></div>
<div style="position:absolute;left:695.5px;top:130px;width:3.5px;height:617px;background:#a2a2a2;"></div>
<div style="position:absolute;left:699px;top:132px;width:660px;height:593.5px;background:#000;"></div>
<div style="position:absolute;left:1359px;top:132px;width:1px;height:614px;background:#f0f0f0;"></div>
<div style="position:absolute;left:699px;top:725.5px;width:661px;height:20.5px;background:#b9b9b9;border-top:1px solid #f0f0f0;box-sizing:border-box;"></div>
<span class="t" style="left:701.80px;top:730.39px;font-size:11px;color:#14323c;letter-spacing:-0.184px;">1360 x 768 (1.04 MP)</span>
<span class="t" style="left:810.90px;top:730.39px;font-size:11px;color:#14323c;letter-spacing:-0.065px;">24bit</span>
<span class="t" style="left:840.70px;top:730.39px;font-size:11px;color:#14323c;letter-spacing:-1.200px;">BMP</span>
<span class="t" style="left:869.00px;top:730.39px;font-size:11px;color:#14323c;letter-spacing:-0.245px;">2.98 MB</span>
<span class="t" style="left:917.90px;top:730.39px;font-size:11px;color:#14323c;letter-spacing:0.041px;">2017-07-10 20:17:17</span>
<span class="t" style="left:1292.90px;top:729.50px;font-size:13px;color:#0f5a66;letter-spacing:-0.872px;font-weight:bold;font-family:'Liberation Serif',serif;">1:1</span>
<svg style="position:absolute;left:1317px;top:729px;" width="16" height="15" viewBox="0 0 16 15"><rect x="3.5" y="3" width="9" height="8.5" fill="#bfe6f2" stroke="#12606e" stroke-width="1.3"/><path d="M8 0.5 V3 M8 11.5 V14.5 M0.5 7.2 H3.5 M12.5 7.2 H15.5" stroke="#12606e" stroke-width="1.6"/></svg>
<svg style="position:absolute;left:1340px;top:729px;" width="16" height="15" viewBox="0 0 16 15"><rect x="3" y="3" width="10" height="8.5" fill="#bfe6f2" stroke="#12606e" stroke-width="1.3"/><path d="M0.7 4 V0.7 H4 M12 0.7 H15.3 V4 M15.3 10.5 V14 H12 M4 14 H0.7 V10.5" fill="none" stroke="#12606e" stroke-width="1.3"/></svg>
<div style="position:absolute;left:0px;top:745.6px;width:1360px;height:20px;background:linear-gradient(to bottom,#b0b0b0 0,#a2a2a2 2px,#9e9e9e 100%);"></div>
<div style="position:absolute;left:386.5px;top:748px;width:1px;height:16px;background:#4a4a4a;"></div><div style="position:absolute;left:387.5px;top:748px;width:1px;height:16px;background:#c2c2c2;"></div>
<div style="position:absolute;left:496.5px;top:748px;width:1px;height:16px;background:#4a4a4a;"></div><div style="position:absolute;left:497.5px;top:748px;width:1px;height:16px;background:#c2c2c2;"></div>
<div style="position:absolute;left:656.8px;top:748px;width:1px;height:16px;background:#4a4a4a;"></div><div style="position:absolute;left:657.8px;top:748px;width:1px;height:16px;background:#c2c2c2;"></div>
<div style="position:absolute;left:782px;top:748px;width:1px;height:16px;background:#4a4a4a;"></div><div style="position:absolute;left:783px;top:748px;width:1px;height:16px;background:#c2c2c2;"></div>
<span class="t" style="left:7.30px;top:751.69px;font-size:11px;color:#0a0a0a;letter-spacing:0.063px;">11.bmp [ 1 / 44 ]</span>
<span class="t" style="left:420.50px;top:751.69px;font-size:11px;color:#0a0a0a;letter-spacing:0.266px;">Папок: 0</span>
<span class="t" style="left:524.00px;top:751.69px;font-size:11px;color:#0a0a0a;letter-spacing:-0.070px;">Файлов: 44 (31.9 MB)</span>
<span class="t" style="left:691.50px;top:751.69px;font-size:11px;color:#0a0a0a;letter-spacing:0.044px;">Выбрано: 1</span>
<div style="position:absolute;left:0px;top:765.3px;width:1360px;height:2.7px;background:linear-gradient(to bottom,#0e6f8c,#2ba6c6);"></div>
<svg width="0" height="0" style="position:absolute"><defs>
<radialGradient id="gsph" cx=".4" cy=".3" r=".75"><stop offset="0" stop-color="#ffffff"/><stop offset=".45" stop-color="#cfc8f4"/><stop offset="1" stop-color="#7d70cc"/></radialGradient>
<linearGradient id="gfold" x1="0" y1="0" x2="0" y2="1"><stop offset="0" stop-color="#fff08a"/><stop offset="1" stop-color="#f4b82a"/></linearGradient>
<linearGradient id="ggreen" x1="0" y1="0" x2="1" y2="1"><stop offset="0" stop-color="#b8dcb0"/><stop offset="1" stop-color="#6fae64"/></linearGradient>
<radialGradient id="gsmile" cx=".5" cy=".4" r=".6"><stop offset="0" stop-color="#fff0a0"/><stop offset=".6" stop-color="#ffcc38"/><stop offset="1" stop-color="#f4921e"/></radialGradient>
<radialGradient id="gball" cx=".4" cy=".3" r=".7"><stop offset="0" stop-color="#d8f0c8"/><stop offset="1" stop-color="#4e9a3c"/></radialGradient>
<linearGradient id="gfs" x1="0" y1="0" x2="1" y2="1"><stop offset="0" stop-color="#e8f6ff"/><stop offset="1" stop-color="#78bff0"/></linearGradient>
<linearGradient id="garr" x1="0" y1="0" x2="0" y2="1"><stop offset="0" stop-color="#fff6b0"/><stop offset="1" stop-color="#f0b020"/></linearGradient>
</defs></svg>
<svg style="position:absolute;left:8px;top:56px;" width="21" height="19" viewBox="0 0 21 19"><path d="M.8 4.5 H4.5 L6 2 H12.5 L14 4.5 H19.2 V15.8 H.8Z" fill="#66666a" stroke="#3c3c40" stroke-width="1"/><path d="M1.3 5 H18.7 V8 H1.3Z" fill="#8a8a90"/><rect x="7" y=".8" width="5" height="1.6" fill="#e8e8e8"/><circle cx="9.3" cy="10" r="5.6" fill="#2e2e32"/><circle cx="9.3" cy="10" r="4.3" fill="#84848c" stroke="#f0f0f0" stroke-width="1.3"/><circle cx="9.3" cy="10" r="2.3" fill="#50505a"/><path d="M13.6 9.3 H18.2 V13 H20.6 L15.9 18.3 L11.2 13 H13.6Z" fill="#2fd23a" stroke="#0e7a18" stroke-width=".9"/></svg>
<svg style="position:absolute;left:42px;top:56px;" width="19" height="19" viewBox="0 0 19 19"><path d="M.8 3.2 Q.8 1.8 2.2 1.8 H7.5 L9.5 4 H15.6 Q17 4 17 5.4 V15.6 Q17 17 15.6 17 H2.2 Q.8 17 .8 15.6Z" fill="url(#gfold)" stroke="#c49a08" stroke-width="1.1"/><path d="M1.5 6.5 H16.3" stroke="#fff6b0" stroke-width="1"/><path d="M3.5 3.2 Q9.5 2.2 10.6 8" fill="none" stroke="#168a22" stroke-width="1.8"/><path d="M6.2 7.6 H14.8 L10.5 13.4Z" fill="#2fd23a" stroke="#0e7a18" stroke-width=".9"/></svg>
<svg style="position:absolute;left:75px;top:56px;" width="19" height="19" viewBox="0 0 19 19"><path d="M.8 .8 H17.2 V17.2 H2.2 L.8 15.8Z" fill="#5a5ac4" stroke="#3c3c9c" stroke-width="1"/><rect x="3.5" y="1.5" width="11" height="8" fill="#f4f4f8"/><path d="M5 4 H13 M5 6.5 H13" stroke="#b8b8cc" stroke-width="1"/><rect x="5" y="11.5" width="9" height="5.7" fill="#d8d8e4"/><rect x="5.8" y="12.5" width="2.6" height="4" fill="#26266a"/></svg>
<svg style="position:absolute;left:108px;top:56px;" width="18" height="18" viewBox="0 0 18 18"><rect x=".7" y=".7" width="16.6" height="16.6" rx="3" fill="url(#ggreen)" stroke="#6f9a78" stroke-width="1.2"/><path d="M1.5 9 H16.5 V14 Q16.5 16.5 14 16.5 H4 Q1.5 16.5 1.5 14Z" fill="#5fa255" fill-opacity=".45"/><path d="M2.2 9 L8.2 3.6 V6.6 H15 V11.4 H8.2 V14.4Z" fill="#ffffff" stroke="#6a8a6a" stroke-width=".9" stroke-linejoin="round"/></svg>
<svg style="position:absolute;left:141px;top:56px;" width="18" height="18" viewBox="0 0 18 18"><rect x=".7" y=".7" width="16.6" height="16.6" rx="3" fill="url(#ggreen)" stroke="#6f9a78" stroke-width="1.2"/><path d="M1.5 9 H16.5 V14 Q16.5 16.5 14 16.5 H4 Q1.5 16.5 1.5 14Z" fill="#5fa255" fill-opacity=".45"/><g transform="translate(18,0) scale(-1,1)"><path d="M2.2 9 L8.2 3.6 V6.6 H15 V11.4 H8.2 V14.4Z" fill="#ffffff" stroke="#6a8a6a" stroke-width=".9" stroke-linejoin="round"/></g></svg>
<svg style="position:absolute;left:174px;top:56px;" width="18.5" height="18.5" viewBox="0 0 18.5 18.5"><path d="M12 13 H17.5 V17.5 H12Z" fill="#58b060" fill-opacity=".7"/><circle cx="9" cy="9" r="8.3" fill="url(#gsph)" stroke="#7468c0" stroke-width="1"/><path d="M4.8 9 H13.2 M9 4.8 V13.2" stroke="#3a36c8" stroke-width="2"/></svg>
<svg style="position:absolute;left:207px;top:56px;" width="18.5" height="18.5" viewBox="0 0 18.5 18.5"><path d="M12 13 H17.5 V17.5 H12Z" fill="#58b060" fill-opacity=".7"/><circle cx="9" cy="9" r="8.3" fill="url(#gsph)" stroke="#7468c0" stroke-width="1"/><path d="M4.8 9 H13.2" stroke="#3a36c8" stroke-width="2"/></svg>
<svg style="position:absolute;left:240px;top:56px;" width="18.5" height="18.5" viewBox="0 0 18.5 18.5"><path d="M12 13 H17.5 V17.5 H12Z" fill="#58b060" fill-opacity=".7"/><circle cx="9" cy="9" r="8.3" fill="url(#gsph)" stroke="#7468c0" stroke-width="1"/><path d="M5.8 6 V12.2 M12.4 6 V12.2 M4.6 7.2 L5.8 6 M11.2 7.2 L12.4 6" stroke="#4a4690" stroke-width="1.7"/><rect x="8.4" y="7" width="1.5" height="1.5" fill="#4a4690"/><rect x="8.4" y="10.4" width="1.5" height="1.5" fill="#4a4690"/></svg>
<div style="position:absolute;left:271px;top:58.3px;width:12.8px;height:12.8px;box-sizing:border-box;border:1px solid #147488;background:linear-gradient(135deg,#d4e8ee,#f6fbfc);"></div>
<svg style="position:absolute;left:271px;top:58.3px;" width="12.8" height="12.8" viewBox="0 0 12.8 12.8"><path d="M3.3 3.5 L9.5 9.5 M9.5 3.5 L3.3 9.5" stroke="#0e6074" stroke-width="2.1"/></svg>
<span class="t" style="left:286.70px;top:58.69px;font-size:11px;color:#0c3a48;letter-spacing:0.026px;">Сглаж.</span>
<div style="position:absolute;left:337px;top:55px;width:63.5px;height:18.8px;box-sizing:border-box;border:1px solid #595959;background:#dcdcdc;"></div>
<div style="position:absolute;left:383.5px;top:56px;width:16px;height:16.8px;box-sizing:border-box;border-left:1px solid #595959;background:#a6a6a6;"></div>
<svg style="position:absolute;left:388px;top:62px;" width="7" height="4" viewBox="0 0 7 4"><path d="M.5 .3 H6.5 L3.5 3.7Z" fill="#1a1a1a"/></svg>
<span class="t" style="left:339.90px;top:58.29px;font-size:11px;color:#101010;letter-spacing:0.284px;">49%</span>
<svg style="position:absolute;left:410px;top:57px;" width="19" height="17" viewBox="0 0 19 17"><path d="M5.5 8.5 V3.6 Q5.5 2.4 6.6 2.4 Q7.7 2.4 7.7 3.6 V2.4 Q7.7 1.2 8.9 1.2 Q10.1 1.2 10.1 2.4 V3 Q10.1 1.9 11.3 1.9 Q12.5 1.9 12.5 3.1 V4.6 Q12.5 3.6 13.6 3.6 Q14.7 3.6 14.7 4.8 V10 Q14.7 15.5 9.8 15.5 Q6.6 15.5 4.8 12.6 L2 8.8 Q1.5 7.6 2.6 7.2 Q3.5 7 4.2 7.8Z" fill="#ffffff" stroke="#161616" stroke-width="1.1" stroke-linejoin="round"/><path d="M7.7 3.6 V8 M10.1 3 V8 M12.5 4.6 V8.4" stroke="#161616" stroke-width="1"/></svg>
<svg style="position:absolute;left:433px;top:63px;" width="7" height="4" viewBox="0 0 7 4"><path d="M0 0 H6.4 L3.2 3.6Z" fill="#2a2a2a"/></svg>
<svg style="position:absolute;left:450px;top:57px;" width="20" height="16" viewBox="0 0 20 16"><rect x=".5" y=".5" width="19" height="15" fill="#f4c8f0"/><rect x=".5" y=".5" width="19" height="3" fill="#5a54b8"/><rect x=".5" y="12.5" width="19" height="3" fill="#5a54b8"/><g fill="#f4f4ff"><rect x="2" y="1.2" width="2" height="1.6"/><rect x="6.5" y="1.2" width="2" height="1.6"/><rect x="11" y="1.2" width="2" height="1.6"/><rect x="15.5" y="1.2" width="2" height="1.6"/><rect x="2" y="13.2" width="2" height="1.6"/><rect x="6.5" y="13.2" width="2" height="1.6"/><rect x="11" y="13.2" width="2" height="1.6"/><rect x="15.5" y="13.2" width="2" height="1.6"/></g><rect x="15" y="3.5" width="4.5" height="9" fill="#fbe8fa"/><path d="M6.2 3.2 L13.4 8 L6.2 12.8Z" fill="#52b83a" stroke="#2f8a1c" stroke-width=".8"/></svg>
<svg style="position:absolute;left:484px;top:56px;" width="19" height="19" viewBox="0 0 19 19"><rect x=".5" y=".5" width="13.5" height="13.5" fill="#eef6ff" stroke="#6a78c0" stroke-width="1"/><path d="M7 1.5 L9.7 4.8 H8.35 L10.78 7.88 H8.8 L11.5 10.85 H7.7 V12.5 H6.3 V10.85 H2.5 L5.2 7.88 H3.22 L5.65 4.8 H4.300000000000001Z" fill="#1f8a2a"/><rect x="9.5" y="9.5" width="8" height="8" fill="#eef6ff" stroke="#6a78c0" stroke-width="1"/><path d="M13.5 10.5 L15.0 12.39 H14.25 L15.6 14.154 H14.5 L16.0 15.855 H14.2 V16.8 H12.8 V15.855 H11.0 L12.5 14.154 H11.4 L12.75 12.39 H12.0Z" fill="#1f8a2a"/></svg>
<svg style="position:absolute;left:517px;top:56px;" width="19" height="19" viewBox="0 0 19 19"><rect x=".5" y=".5" width="15.5" height="15" fill="#dff0ff" stroke="#6a78c0" stroke-width="1"/><path d="M1 15 V9 L5 6 L8 9 L12 3 L15.5 8 V15Z" fill="#2a8c3a"/><rect x="1" y="9.5" width="14.5" height="5.5" fill="#2f7a30" fill-opacity=".7"/><path d="M4.5 2.5 V13.5 H18 M2 5 H13.5 V17.5" fill="none" stroke="#f2e000" stroke-width="2.2"/><path d="M4.5 2.5 V13.5 H18 M2 5 H13.5 V17.5" fill="none" stroke="#a89800" stroke-width=".5"/></svg>
<svg style="position:absolute;left:550px;top:55px;" width="19" height="20" viewBox="0 0 19 20"><rect x="6.5" y="5" width="12" height="13.5" fill="#eef4ff" stroke="#6a78c0" stroke-width="1"/><text x="1.8" y="7.5" font-family="Liberation Sans,sans-serif" font-size="8" font-weight="bold" fill="#c89a50">A</text><text x="9" y="13" font-family="Liberation Sans,sans-serif" font-size="10" font-weight="bold" font-style="italic" fill="#2a8a30">B</text><text x="-0.5" y="18.5" font-family="Liberation Sans,sans-serif" font-size="12.5" font-weight="bold" font-style="italic" fill="#1a1acc">C</text></svg>
<svg style="position:absolute;left:583px;top:56px;" width="18" height="18" viewBox="0 0 18 18"><circle cx="9" cy="9" r="8.2" fill="url(#gsmile)" stroke="#f08a1a" stroke-width="1.2"/><ellipse cx="6.2" cy="6.8" rx="1" ry="1.5" fill="#a85a00"/><ellipse cx="11.8" cy="6.8" rx="1" ry="1.5" fill="#a85a00"/><path d="M4.6 10.2 Q9 15 13.4 10.2" fill="none" stroke="#c46a08" stroke-width="1.4"/><path d="M5.2 11.4 Q9 15.4 12.8 11.4" fill="none" stroke="#fff2b0" stroke-width=".8"/></svg>
<svg style="position:absolute;left:615px;top:56px;" width="20" height="19" viewBox="0 0 20 19"><circle cx="10" cy="5.8" r="5.3" fill="url(#gball)" stroke="#4a8a3c" stroke-width=".6"/><rect x="9" y="10.5" width="2" height="3" fill="#4a8a3c"/><path d="M2.5 13.5 H17.5 L19 15.2 H1Z" fill="#3f9a34"/><rect x="1" y="15" width="18" height="1.6" fill="#c8b020"/><rect x="1" y="16.4" width="18" height="1.4" fill="#d85a20"/></svg>
<svg style="position:absolute;left:648px;top:55px;" width="20" height="20" viewBox="0 0 20 20"><g transform="translate(2.5,0)"><path d="M1 7 L7.8 .6 V4.2 Q15.5 4 15.8 11 Q15.8 14 13.5 16 Q14 9.8 7.8 9.8 V13.4Z" fill="#3fc43a" stroke="#0c5a7a" stroke-width="1"/><path d="M7.8 .6 V13.4" stroke="#0a4a80" stroke-width="1.2"/></g><rect x="1" y="13" width="5.8" height="6" fill="#e0503a"/><rect x="6.8" y="13" width="5.8" height="6" fill="#e0503a"/><text x="1.6" y="18.5" font-family="Liberation Sans,sans-serif" font-size="7" font-weight="bold" fill="#fff8e8" textLength="10.4" lengthAdjust="spacingAndGlyphs">90</text></svg>
<svg style="position:absolute;left:681px;top:55px;" width="20" height="20" viewBox="0 0 20 20"><g transform="translate(17,0) scale(-1,1)"><path d="M1 7 L7.8 .6 V4.2 Q15.5 4 15.8 11 Q15.8 14 13.5 16 Q14 9.8 7.8 9.8 V13.4Z" fill="#3fc43a" stroke="#0c5a7a" stroke-width="1"/><path d="M7.8 .6 V13.4" stroke="#0a4a80" stroke-width="1.2"/></g><rect x="7.5" y="13" width="5.8" height="6" fill="#e0503a"/><rect x="13.3" y="13" width="5.8" height="6" fill="#e0503a"/><text x="8.1" y="18.5" font-family="Liberation Sans,sans-serif" font-size="7" font-weight="bold" fill="#fff8e8" textLength="10.4" lengthAdjust="spacingAndGlyphs">90</text></svg>
<svg style="position:absolute;left:714px;top:57px;" width="19" height="17" viewBox="0 0 19 17"><rect x=".6" y=".6" width="8" height="15" fill="#e4f0ff" stroke="#6a78c0" stroke-width="1.1"/><rect x="10.4" y=".6" width="8" height="15" fill="#e4f0ff" stroke="#6a78c0" stroke-width="1.1"/><path d="M4.6 3.5 L6.3999999999999995 6.65 H5.5 L7.119999999999999 9.59 H5.8 L7.6 12.424999999999999 H5.3 V14 H3.8999999999999995 V12.424999999999999 H1.5999999999999996 L3.3999999999999995 9.59 H2.0799999999999996 L3.6999999999999997 6.65 H2.8Z" fill="#1f8a2a"/><path d="M14.4 3.5 L16.2 6.65 H15.3 L16.92 9.59 H15.600000000000001 L17.4 12.424999999999999 H15.1 V14 H13.700000000000001 V12.424999999999999 H11.4 L13.2 9.59 H11.88 L13.5 6.65 H12.600000000000001Z" fill="#1f8a2a"/></svg>
<svg style="position:absolute;left:748px;top:57px;" width="19" height="18" viewBox="0 0 19 18"><rect x=".8" y=".8" width="15" height="10.5" fill="#e8eaf8" stroke="#5a5aa8" stroke-width="1.6"/><rect x="5" y="12" width="6" height="2" fill="#7a7ab8"/><rect x="3" y="14" width="10" height="1.3" fill="#8a8ac0"/><rect x="6.5" y="8.5" width="11.5" height="8.5" fill="#f0d020" stroke="#b89400" stroke-width="1"/><rect x="9" y="11" width="6.5" height="3.6" fill="#6a6aa8"/><rect x="9" y="12.8" width="6.5" height="1.8" fill="#8a7ab0"/></svg>
<svg style="position:absolute;left:781px;top:56px;" width="19" height="19" viewBox="0 0 19 19"><path d="M5 1 L7.5 .5 L17.5 10 L15.5 11.5Z" fill="#a8a4e8" stroke="#6a66c4" stroke-width="1"/><path d="M1 13 L5.5 8.5 H14 L17.5 13Z" fill="#f4f4fc" stroke="#7a76cc" stroke-width="1"/><rect x="1" y="13" width="16.5" height="4" rx="1" fill="#c4c0f0" stroke="#6a66c4" stroke-width="1"/></svg>
<svg style="position:absolute;left:814px;top:56px;" width="19" height="19" viewBox="0 0 19 19"><path d="M3 6 L12.5 1 L15 7Z" fill="#fff8d8" stroke="#c8a030" stroke-width=".7"/><path d="M1 7 L9.5 3.5 L18 7 V17 H1Z" fill="#f8d040" stroke="#c49010" stroke-width="1"/><path d="M1 7 L9.5 13 L18 7" fill="#ffe680" stroke="#c49010" stroke-width="1"/><path d="M1 17 L7 11.5 M18 17 L12 11.5" stroke="#c49010" stroke-width=".9"/></svg>
<svg style="position:absolute;left:846px;top:56px;" width="21" height="19" viewBox="0 0 21 19"><rect x="5" y=".8" width="11" height="4" fill="#f8f8ff" stroke="#8a86cc" stroke-width=".8"/><rect x="4.5" y="4" width="12" height="5.5" fill="#8a58b0"/><rect x="4.5" y="4" width="12" height="2" fill="#a878c8"/><path d="M1 9.5 Q1 8 2.5 8 H18.5 Q20 8 20 9.5 V15 H1Z" fill="#d8d4f8" stroke="#7a76c8" stroke-width="1"/><rect x="4.5" y="13" width="12" height="2" fill="#38b048"/><rect x="3" y="15" width="15" height="2.5" fill="#f4f4ff" stroke="#8a86cc" stroke-width=".7"/></svg>
<svg style="position:absolute;left:879px;top:56px;" width="20" height="19" viewBox="0 0 20 19"><rect x=".7" y="1" width="16.6" height="15.6" fill="#eef2fa" stroke="#7a82c8" stroke-width="1.2"/><rect x="2" y="2.5" width="14" height="3" fill="#a89a3a"/><rect x="2" y="2.5" width="7" height="3" fill="#8a7c20"/><g fill="#e0b020" stroke="#a88408" stroke-width=".6"><rect x="3" y="7.5" width="2.6" height="2.6"/><rect x="7.6" y="7.5" width="2.6" height="2.6"/><rect x="12.2" y="7.5" width="2.6" height="2.6"/></g><rect x="2" y="12" width="14" height="3.5" fill="#d4dcec"/><path d="M7.5 13.2 L10.6 16.6 L18.4 9.2" fill="none" stroke="#0e8a1c" stroke-width="2.6"/><path d="M7.5 13.2 L10.6 16.6 L18.4 9.2" fill="none" stroke="#3fd848" stroke-width="1.3"/></svg>
<svg style="position:absolute;left:1233px;top:56px;" width="19" height="19" viewBox="0 0 19 19"><rect x=".6" y=".8" width="17" height="2.2" fill="#f8f8ff" stroke="#7a76cc" stroke-width=".9"/><rect x=".6" y="4.8" width="5" height="5.4" fill="#f4f4fc" stroke="#7a76cc" stroke-width=".9"/><path d="M2 6.6 H4.2 M2 8.4 H4.2" stroke="#c8a030" stroke-width=".9"/><rect x=".6" y="12" width="5" height="5" fill="#f4f4fc" stroke="#7a76cc" stroke-width=".9"/><rect x="1.8" y="14" width="2.6" height="3" fill="#a87858"/><rect x="7.6" y="4.8" width="10" height="12.2" fill="#f8f8ff" stroke="#7a76cc" stroke-width=".9"/><g fill="#d8a818" stroke="#9a7808" stroke-width=".7"><rect x="9.4" y="6.6" width="2.4" height="2.4"/><rect x="13.4" y="6.6" width="2.4" height="2.4"/><rect x="9.4" y="11.4" width="2.4" height="2.4"/><rect x="13.4" y="11.4" width="2.4" height="2.4"/></g></svg>
<div style="position:absolute;left:1260px;top:51.6px;width:31px;height:26.8px;background:linear-gradient(to bottom,#f6f6f6,#ececec);border-radius:3px;"></div>
<svg style="position:absolute;left:1267px;top:57px;" width="19" height="18" viewBox="0 0 19 18"><rect x=".6" y=".6" width="17.2" height="2.4" fill="#f8f8ff" stroke="#5a56b4" stroke-width="1"/><rect x=".6" y="4.8" width="5" height="12.2" fill="#f8f8ff" stroke="#5a56b4" stroke-width="1"/><path d="M2 7 H4.2 M2 9.2 H4.2 M2 11.4 H4.2 M2 13.6 H4.2" stroke="#c8a030" stroke-width=".9"/><rect x="7.8" y="4.8" width="10" height="12.2" fill="#f0f0fa" stroke="#5a56b4" stroke-width="1"/><circle cx="12.8" cy="10.68" r="2.09" fill="#b8922a"/><path d="M8.81 16.0 Q9.0 12.2 12.8 12.2 Q16.6 12.2 16.79 16.0Z" fill="#b8922a"/></svg>
<svg style="position:absolute;left:1299px;top:56px;" width="19" height="19" viewBox="0 0 19 19"><rect x=".6" y=".8" width="17.2" height="2.2" fill="#f8f8ff" stroke="#7a76cc" stroke-width=".9"/><rect x=".6" y="4.8" width="17.2" height="12.6" fill="#f0f0fa" stroke="#6a66c0" stroke-width="1"/><circle cx="9.2" cy="10.12" r="2.8600000000000003" fill="#b8922a"/><path d="M3.7399999999999984 17.4 Q3.999999999999999 12.2 9.2 12.2 Q14.399999999999999 12.2 14.66 17.4Z" fill="#b8922a"/></svg>
<svg style="position:absolute;left:1331px;top:56px;" width="21" height="19" viewBox="0 0 21 19"><rect x="4" y="3.4" width="12.6" height="11.6" fill="url(#gfs)" stroke="#5a7ad0" stroke-width=".8"/><g fill="#2fc028" stroke="#168a14" stroke-width=".6"><path d="M.4 .4 H5.6 L3.9 2.1 L6.6 4.8 L4.8 6.6 L2.1 3.9 L.4 5.6Z"/><path d="M20 .4 V5.6 L18.3 3.9 L15.6 6.6 L13.8 4.8 L16.5 2.1 L14.8 .4Z"/><path d="M.4 18 V12.8 L2.1 14.5 L4.8 11.8 L6.6 13.6 L3.9 16.3 L5.6 18Z"/><path d="M20 18 H14.8 L16.5 16.3 L13.8 13.6 L15.6 11.8 L18.3 14.5 L20 12.8Z"/></g></svg>
<svg style="position:absolute;left:395px;top:86px;" width="15" height="15" viewBox="0 0 15 15"><path d="M.8 7.2 L7.2 1 V4.4 H14 V10 H7.2 V13.4Z" fill="url(#garr)" stroke="#b07a08" stroke-width="1" stroke-linejoin="round"/></svg>
<svg style="position:absolute;left:421.5px;top:86px;" width="15" height="15" viewBox="0 0 15 15"><path d="M14.2 7.2 L7.8 1 V4.4 H1 V10 H7.8 V13.4Z" fill="#f2f2f2" stroke="#8e8e8e" stroke-width="1" stroke-linejoin="round"/></svg>
<svg style="position:absolute;left:448px;top:85px;" width="17" height="17" viewBox="0 0 17 17"><path d="M1 4 Q1 2.5 2.5 2.5 H6.5 L8 4.2 H14 Q15.5 4.2 15.5 5.7 V13 Q15.5 14.5 14 14.5 H2.5 Q1 14.5 1 13Z" fill="url(#gfold)" stroke="#c48a10" stroke-width="1"/><path d="M8.5 0.6 L12.6 5.4 H10 V11.5 H7 V5.4 H4.4Z" fill="#2fd23a" stroke="#0c7a18" stroke-width=".9"/></svg>
<svg style="position:absolute;left:475px;top:85px;" width="17" height="17" viewBox="0 0 17 17"><path d="M1 4 Q1 2.5 2.5 2.5 H6.5 L8 4.2 H14 Q15.5 4.2 15.5 5.7 V13 Q15.5 14.5 14 14.5 H2.5 Q1 14.5 1 13Z" fill="url(#gfold)" stroke="#c48a10" stroke-width="1"/><path d="M4.5 8.5 Q4.5 5.2 8 5.2 H9.5 V3.4 L12.6 6.2 L9.5 9 V7.2 H8 Q6.5 7.2 6.5 8.5Z" fill="#2fd23a" stroke="#0c7a18" stroke-width=".7"/><path d="M12.2 9 Q12.2 12.3 8.7 12.3 H7.2 V14 L4.1 11.3 L7.2 8.5 V10.3 H8.7 Q10.2 10.3 10.2 9Z" fill="#2fd23a" stroke="#0c7a18" stroke-width=".7"/></svg>
<svg style="position:absolute;left:502px;top:85px;" width="17" height="17" viewBox="0 0 17 17"><path d="M1 4 Q1 2.5 2.5 2.5 H6.5 L8 4.2 H14 Q15.5 4.2 15.5 5.7 V13 Q15.5 14.5 14 14.5 H2.5 Q1 14.5 1 13Z" fill="url(#gfold)" stroke="#c48a10" stroke-width="1"/><path d="M8.3 5 L9.6 8 L12.8 8.2 L10.3 10.2 L11.2 13.3 L8.3 11.5 L5.4 13.3 L6.3 10.2 L3.8 8.2 L7 8Z" fill="#fff07a" stroke="#b88808" stroke-width="1"/></svg>
<svg style="position:absolute;left:529px;top:85px;" width="17" height="17" viewBox="0 0 17 17"><path d="M1 4 Q1 2.5 2.5 2.5 H6.5 L8 4.2 H14 Q15.5 4.2 15.5 5.7 V13 Q15.5 14.5 14 14.5 H2.5 Q1 14.5 1 13Z" fill="url(#gfold)" stroke="#c48a10" stroke-width="1"/><g stroke="#f04020" stroke-width="1.2"><path d="M11.5 1 V3.4 M11.5 7.6 V10 M7 5.5 H9.4 M13.6 5.5 H16 M8.3 2.3 L10 4 M13 7 L14.7 8.7 M14.7 2.3 L13 4 M10 7 L8.3 8.7"/></g></svg>
<svg style="position:absolute;left:556px;top:85px;" width="16" height="17" viewBox="0 0 16 17"><g transform="translate(3.5,0) scale(.72)"><path d="M1 4 Q1 2.5 2.5 2.5 H6.5 L8 4.2 H14 Q15.5 4.2 15.5 5.7 V13 Q15.5 14.5 14 14.5 H2.5 Q1 14.5 1 13Z" fill="url(#gfold)" stroke="#c48a10" stroke-width="1"/></g><rect x=".8" y="8.5" width="6" height="6" fill="#f4f4ff" stroke="#6a76c8" stroke-width=".9"/><rect x="3.2" y="10.6" width="6" height="6" fill="#fcfcff" stroke="#6a76c8" stroke-width=".9"/><path d="M5.5 11 L10.2 6.3 M7 5.2 H11.4 V9.6" fill="none" stroke="#0c7a18" stroke-width="2.6"/><path d="M5.5 11 L10.2 6.3 M7.4 5.5 H11 V9.2" fill="none" stroke="#2fd23a" stroke-width="1.2"/><rect x="8" y="3" width="5.4" height="5.4" fill="none" stroke="#0c7a18" stroke-width=".8"/></svg>
<svg style="position:absolute;left:583px;top:85px;" width="16" height="17" viewBox="0 0 16 17"><g transform="translate(3.5,0) scale(.72)"><path d="M1 4 Q1 2.5 2.5 2.5 H6.5 L8 4.2 H14 Q15.5 4.2 15.5 5.7 V13 Q15.5 14.5 14 14.5 H2.5 Q1 14.5 1 13Z" fill="url(#gfold)" stroke="#c48a10" stroke-width="1"/></g><rect x=".8" y="8.5" width="6" height="6" fill="#f4f4ff" stroke="#6a76c8" stroke-width=".9"/><rect x="3.2" y="10.6" width="6" height="6" fill="#fcfcff" stroke="#6a76c8" stroke-width=".9"/><path d="M3.5 5.6 H9.6 V3.2 L13.6 6.8 L9.6 10.4 V8 H3.5Z" fill="#2fd23a" stroke="#0c7a18" stroke-width=".9"/></svg>
<svg style="position:absolute;left:610px;top:86px;" width="15" height="15" viewBox="0 0 15 15"><path d="M2.4 3 L12.2 12.8 M12.4 2.4 L2.6 12.8" stroke="#d4441e" stroke-width="2.7" stroke-linecap="round"/></svg>
<svg style="position:absolute;left:638px;top:86.5px;" width="15" height="15" viewBox="0 0 15 15"><rect x=".8" y=".8" width="13.4" height="12.8" fill="#f8f8ff" stroke="#4a4aa8" stroke-width="1.4"/><rect x=".8" y=".8" width="13.4" height="1.6" fill="#4a4aa8"/><g fill="#1e8a2a"><rect x="2.4" y="3.6" width="2.8" height="3.2"/><rect x="6.1" y="3.6" width="2.8" height="3.2"/><rect x="9.8" y="3.6" width="2.8" height="3.2"/></g><g fill="#f0a070"><rect x="2.4" y="8.2" width="2.8" height="3.6"/><rect x="6.1" y="8.2" width="2.8" height="3.6"/><rect x="9.8" y="8.2" width="2.8" height="3.6"/></g></svg>
<svg style="position:absolute;left:664px;top:87px;" width="16" height="15" viewBox="0 0 16 15"><path d="M0 0.5 H1 M3 0.5 H7 M8 0.5 H11 M12 0.5 H15" stroke="#5a56c4" stroke-width="1" shape-rendering="crispEdges"/><path d="M0 2.5 H1 M3 2.5 H7 M8 2.5 H11 M12 2.5 H15" stroke="#5a56c4" stroke-width="1" shape-rendering="crispEdges"/><path d="M0 4.5 H1 M3 4.5 H7 M8 4.5 H11 M12 4.5 H15" stroke="#5a56c4" stroke-width="1" shape-rendering="crispEdges"/><path d="M0 6.5 H1 M3 6.5 H7 M8 6.5 H11 M12 6.5 H15" stroke="#5a56c4" stroke-width="1" shape-rendering="crispEdges"/><path d="M0 8.5 H1 M3 8.5 H7 M8 8.5 H11 M12 8.5 H15" stroke="#5a56c4" stroke-width="1" shape-rendering="crispEdges"/><path d="M0 10.5 H1 M3 10.5 H7 M8 10.5 H11 M12 10.5 H15" stroke="#5a56c4" stroke-width="1" shape-rendering="crispEdges"/><path d="M0 12.5 H1 M3 12.5 H7 M8 12.5 H11 M12 12.5 H15" stroke="#5a56c4" stroke-width="1" shape-rendering="crispEdges"/></svg>
<svg style="position:absolute;left:691px;top:87px;" width="16" height="15" viewBox="0 0 16 15"><rect x=".5" y="1.5" width="2.4" height="2" fill="none" stroke="#6a66c8" stroke-width=".8"/><path d="M4 2.5 H6.6 M12 2.5 H15" stroke="#6a66c8" stroke-width="1"/><rect x="8" y="1.5" width="2.4" height="2" fill="none" stroke="#6a66c8" stroke-width=".8"/><rect x=".5" y="6.1" width="2.4" height="2" fill="none" stroke="#6a66c8" stroke-width=".8"/><path d="M4 7.1 H6.6 M12 7.1 H15" stroke="#6a66c8" stroke-width="1"/><rect x="8" y="6.1" width="2.4" height="2" fill="none" stroke="#6a66c8" stroke-width=".8"/><rect x=".5" y="10.7" width="2.4" height="2" fill="none" stroke="#6a66c8" stroke-width=".8"/><path d="M4 11.7 H6.6 M12 11.7 H15" stroke="#6a66c8" stroke-width="1"/><rect x="8" y="10.7" width="2.4" height="2" fill="none" stroke="#6a66c8" stroke-width=".8"/></svg>
<svg style="position:absolute;left:0;top:0" width="1360" height="768" viewBox="0 0 1360 768"><defs>
<clipPath id="imgclip"><rect x="699" y="242" width="660" height="372.7"/></clipPath>
<linearGradient id="sky" x1="0" y1="242" x2="0" y2="420" gradientUnits="userSpaceOnUse">
 <stop offset="0" stop-color="#040b44"/><stop offset=".18" stop-color="#061462"/><stop offset=".36" stop-color="#08248a"/><stop offset=".5" stop-color="#0d40ae"/><stop offset=".7" stop-color="#2a86da"/><stop offset="1" stop-color="#9fd0ee"/></linearGradient>
<radialGradient id="glow" cx="1024" cy="328" r="54" gradientUnits="userSpaceOnUse">
 <stop offset="0" stop-color="#b8ffff" stop-opacity="1"/><stop offset=".25" stop-color="#3fd2ff" stop-opacity=".8"/><stop offset=".6" stop-color="#1f8fe8" stop-opacity=".32"/><stop offset="1" stop-color="#1060d0" stop-opacity="0"/></radialGradient>
<radialGradient id="planet" cx="1499" cy="485" r="317" gradientUnits="userSpaceOnUse">
 <stop offset="0" stop-color="#0a3a8c"/><stop offset=".45" stop-color="#0c4ea8"/><stop offset=".6" stop-color="#0e62ac"/><stop offset=".74" stop-color="#1088b8"/><stop offset=".88" stop-color="#18b6c2"/><stop offset=".935" stop-color="#48ecdc"/><stop offset=".955" stop-color="#d8fff6"/><stop offset=".968" stop-color="#ffffff"/><stop offset=".992" stop-color="#f8fffd"/><stop offset="1" stop-color="#aafaf2"/></radialGradient>
<radialGradient id="halo" cx="1499" cy="485" r="345" gradientUnits="userSpaceOnUse">
 <stop offset=".9" stop-color="#40d8ff" stop-opacity=".9"/><stop offset=".94" stop-color="#2aa8f0" stop-opacity=".5"/><stop offset="1" stop-color="#1060d0" stop-opacity="0"/></radialGradient>
<linearGradient id="pshade" x1="1230" y1="260" x2="1360" y2="400" gradientUnits="userSpaceOnUse">
 <stop offset="0" stop-color="#0a3c9a" stop-opacity="0"/><stop offset=".4" stop-color="#0a3c9a" stop-opacity=".12"/><stop offset=".7" stop-color="#0a3c9a" stop-opacity=".55"/><stop offset="1" stop-color="#0a3a98" stop-opacity=".9"/></linearGradient>
<radialGradient id="moon" cx="1180" cy="322" r="48" gradientUnits="userSpaceOnUse">
 <stop offset="0" stop-color="#2a78d8"/><stop offset=".5" stop-color="#1a5cc0"/><stop offset="1" stop-color="#103c9c"/></radialGradient>
<linearGradient id="c1" x1="1214" y1="244" x2="1144" y2="281" gradientUnits="userSpaceOnUse">
 <stop offset="0" stop-color="#1f8fe8" stop-opacity=".25"/><stop offset=".5" stop-color="#22a0f4" stop-opacity=".9"/><stop offset="1" stop-color="#7fe8ff"/></linearGradient>
<linearGradient id="c2" x1="1276" y1="244" x2="1187" y2="289" gradientUnits="userSpaceOnUse">
 <stop offset="0" stop-color="#1f8fe8" stop-opacity=".3"/><stop offset=".5" stop-color="#22a0f4" stop-opacity=".95"/><stop offset="1" stop-color="#8ff0ff"/></linearGradient>
<linearGradient id="grass" x1="0" y1="505" x2="0" y2="615" gradientUnits="userSpaceOnUse">
 <stop offset="0" stop-color="#2aac10"/><stop offset=".3" stop-color="#2cb00e"/><stop offset=".65" stop-color="#26a00a"/><stop offset="1" stop-color="#2ea80e"/></linearGradient>
<linearGradient id="gleft" x1="996" y1="0" x2="1180" y2="0" gradientUnits="userSpaceOnUse"><stop offset="0" stop-color="#0a5a06" stop-opacity=".6"/><stop offset=".5" stop-color="#0a5a06" stop-opacity=".22"/><stop offset="1" stop-color="#0a5a06" stop-opacity="0"/></linearGradient>
<linearGradient id="mtn" x1="0" y1="384" x2="0" y2="500" gradientUnits="userSpaceOnUse">
 <stop offset="0" stop-color="#0b363e"/><stop offset=".3" stop-color="#092e22"/><stop offset="1" stop-color="#0b3816"/></linearGradient>
<linearGradient id="bmtn" x1="0" y1="400" x2="0" y2="480" gradientUnits="userSpaceOnUse">
 <stop offset="0" stop-color="#1c4a94"/><stop offset="1" stop-color="#0c2c74"/></linearGradient>
<filter id="cloudf" x="-5%" y="-20%" width="110%" height="140%"><feTurbulence type="fractalNoise" baseFrequency="0.045" numOctaves="3" seed="4" result="n"/><feDisplacementMap in="SourceGraphic" in2="n" scale="16" xChannelSelector="R" yChannelSelector="G"/><feGaussianBlur stdDeviation=".7"/></filter>
<filter id="cloudshade" x="0" y="0" width="100%" height="100%"><feTurbulence type="fractalNoise" baseFrequency="0.06 0.09" numOctaves="3" seed="11" result="n"/><feColorMatrix in="n" type="matrix" values="0 0 0 0 0.22  0 0 0 0 0.28  0 0 0 0 0.38  2.6 0 0 0 -1.05" result="s"/><feComposite in="s" in2="SourceAlpha" operator="in"/></filter>
<filter id="grassn" x="0" y="0" width="100%" height="100%"><feTurbulence type="fractalNoise" baseFrequency="0.3 0.45" numOctaves="2" seed="3" result="n"/><feColorMatrix in="n" type="matrix" values="0 0 0 0 0.03  0 0 0 0 0.3  0 0 0 0 0.02  0 2.2 0 0 -0.85" result="s"/><feComposite in="s" in2="SourceAlpha" operator="in"/></filter>
<filter id="grassl" x="0" y="0" width="100%" height="100%"><feTurbulence type="fractalNoise" baseFrequency="0.3 0.5" numOctaves="2" seed="9" result="n"/><feColorMatrix in="n" type="matrix" values="0 0 0 0 0.42  0 0 0 0 0.9  0 0 0 0 0.1  1.8 0 0 0 -0.75" result="s"/><feComposite in="s" in2="SourceAlpha" operator="in"/></filter>
<filter id="patch" x="0" y="0" width="100%" height="100%"><feTurbulence type="fractalNoise" baseFrequency="0.035 0.075" numOctaves="3" seed="21" result="n"/><feColorMatrix in="n" type="matrix" values="0 0 0 0 0.22  0 0 0 0 0.78  0 0 0 0 0.12  0 3.4 0 0 -1.75" result="s"/><feComposite in="s" in2="SourceAlpha" operator="in"/></filter>
<filter id="swirl" x="0" y="0" width="100%" height="100%"><feTurbulence type="fractalNoise" baseFrequency="0.018 0.05" numOctaves="4" seed="5" result="n"/><feColorMatrix in="n" type="matrix" values="0 0 0 0 0.85  0 0 0 0 1  0 0 0 0 0.98  2.8 0 0 0 -1.25" result="s"/><feComposite in="s" in2="SourceAlpha" operator="in"/></filter>
<filter id="treef" x="-20%" y="-10%" width="140%" height="120%"><feTurbulence type="fractalNoise" baseFrequency="0.12" numOctaves="2" seed="8" result="n"/><feDisplacementMap in="SourceGraphic" in2="n" scale="7" xChannelSelector="R" yChannelSelector="G"/></filter>
<filter id="patchf" x="-5%" y="-5%" width="110%" height="110%"><feTurbulence type="fractalNoise" baseFrequency="0.09" numOctaves="2" seed="2" result="n"/><feDisplacementMap in="SourceGraphic" in2="n" scale="9" xChannelSelector="R" yChannelSelector="G"/><feGaussianBlur stdDeviation=".8"/></filter>
<filter id="b1"><feGaussianBlur stdDeviation="1.2"/></filter>
<filter id="b2"><feGaussianBlur stdDeviation="2.5"/></filter>
<filter id="b4"><feGaussianBlur stdDeviation="5"/></filter>
</defs><g clip-path="url(#imgclip)"><rect x="699" y="242" width="660" height="373" fill="url(#sky)"/><rect x="699" y="242" width="660" height="200" fill="url(#glow)"/><g fill="#cfe0ff" fill-opacity=".6"><circle cx="1094.4" cy="256.1" r="0.6"/><circle cx="1010.7" cy="314.5" r="0.3"/><circle cx="1107.2" cy="248.0" r="0.5"/><circle cx="1061.3" cy="250.5" r="0.45"/><circle cx="1017.2" cy="250.9" r="0.45"/><circle cx="1014.0" cy="292.2" r="0.35"/><circle cx="1187.7" cy="293.7" r="0.3"/><circle cx="1171.4" cy="277.5" r="0.35"/><circle cx="1010.2" cy="317.7" r="0.4"/><circle cx="1123.4" cy="290.0" r="0.5"/><circle cx="1089.8" cy="314.0" r="0.35"/><circle cx="1027.3" cy="292.7" r="0.35"/><circle cx="1109.2" cy="290.7" r="0.3"/><circle cx="1167.6" cy="296.9" r="0.45"/><circle cx="1202.8" cy="280.2" r="0.4"/><circle cx="1137.5" cy="323.3" r="0.4"/><circle cx="1087.1" cy="312.1" r="0.6"/><circle cx="1233.1" cy="250.1" r="0.4"/><circle cx="1155.7" cy="319.1" r="0.6"/><circle cx="1132.4" cy="296.0" r="0.3"/><circle cx="1031.9" cy="279.4" r="0.4"/><circle cx="1042.2" cy="285.5" r="0.3"/><circle cx="1288.5" cy="249.8" r="0.5"/><circle cx="1170.2" cy="319.2" r="0.4"/><circle cx="1099.4" cy="273.5" r="0.45"/><circle cx="1172.3" cy="282.7" r="0.3"/><circle cx="1283.2" cy="284.2" r="0.6"/><circle cx="1015.8" cy="306.6" r="0.4"/><circle cx="1192.7" cy="329.4" r="0.45"/><circle cx="1082.5" cy="276.6" r="0.6"/><circle cx="1101.5" cy="324.8" r="0.4"/><circle cx="1047.1" cy="253.2" r="0.3"/><circle cx="1062.3" cy="268.0" r="0.6"/><circle cx="1071.3" cy="277.0" r="0.45"/><circle cx="1020.5" cy="282.1" r="0.5"/><circle cx="1080.5" cy="254.9" r="0.45"/><circle cx="1258.7" cy="267.2" r="0.45"/><circle cx="1295.9" cy="302.4" r="0.45"/><circle cx="1287.2" cy="256.1" r="0.35"/><circle cx="1042.0" cy="300.3" r="0.3"/><circle cx="1143.4" cy="294.3" r="0.4"/><circle cx="1081.7" cy="255.7" r="0.5"/><circle cx="1108.3" cy="292.3" r="0.35"/><circle cx="1205.9" cy="287.8" r="0.5"/><circle cx="1195.1" cy="307.4" r="0.45"/><circle cx="1269.5" cy="310.9" r="0.6"/><circle cx="1238.6" cy="277.1" r="0.45"/><circle cx="1115.8" cy="284.9" r="0.45"/><circle cx="1014.9" cy="248.9" r="0.35"/><circle cx="1130.0" cy="252.6" r="0.5"/><circle cx="1012.0" cy="243.0" r="0.35"/><circle cx="1159.1" cy="325.6" r="0.5"/><circle cx="1003.8" cy="319.1" r="0.5"/><circle cx="1110.4" cy="298.2" r="0.4"/><circle cx="1179.1" cy="284.3" r="0.3"/><circle cx="1254.1" cy="329.4" r="0.45"/><circle cx="1142.0" cy="270.1" r="0.35"/><circle cx="1027.1" cy="272.8" r="0.4"/><circle cx="1141.5" cy="303.2" r="0.5"/><circle cx="1003.0" cy="325.7" r="0.5"/><circle cx="1106.0" cy="303.0" r="0.3"/><circle cx="1226.5" cy="268.9" r="0.6"/><circle cx="1258.5" cy="303.6" r="0.4"/><circle cx="1153.6" cy="322.0" r="0.4"/><circle cx="1230.7" cy="289.3" r="0.5"/><circle cx="1096.2" cy="262.4" r="0.35"/><circle cx="1241.0" cy="314.2" r="0.6"/><circle cx="1240.2" cy="260.4" r="0.45"/><circle cx="1104.1" cy="245.5" r="0.3"/><circle cx="1236.2" cy="284.1" r="0.35"/><circle cx="1206.5" cy="326.2" r="0.45"/><circle cx="1241.8" cy="305.9" r="0.4"/><circle cx="1286.3" cy="274.7" r="0.35"/><circle cx="1027.1" cy="283.9" r="0.4"/><circle cx="1058.1" cy="297.3" r="0.5"/><circle cx="1251.5" cy="284.7" r="0.6"/><circle cx="1100.6" cy="299.0" r="0.6"/><circle cx="1032.5" cy="276.8" r="0.6"/><circle cx="1224.0" cy="284.6" r="0.35"/><circle cx="1127.9" cy="298.3" r="0.3"/><circle cx="1239.5" cy="327.5" r="0.45"/><circle cx="1136.8" cy="307.7" r="0.3"/><circle cx="1216.3" cy="257.8" r="0.35"/><circle cx="1004.4" cy="294.4" r="0.45"/><circle cx="1241.2" cy="255.7" r="0.5"/><circle cx="1294.0" cy="300.2" r="0.4"/><circle cx="1043.4" cy="290.7" r="0.3"/><circle cx="1000.3" cy="327.5" r="0.6"/><circle cx="1027.2" cy="308.2" r="0.35"/><circle cx="1127.9" cy="318.8" r="0.35"/><circle cx="1004.5" cy="261.5" r="0.5"/><circle cx="1069.1" cy="294.0" r="0.4"/><circle cx="1161.5" cy="315.6" r="0.3"/><circle cx="1272.6" cy="273.8" r="0.45"/><circle cx="1197.4" cy="313.9" r="0.5"/><circle cx="1123.9" cy="322.8" r="0.5"/><circle cx="1035.8" cy="256.2" r="0.5"/><circle cx="1001.7" cy="281.3" r="0.35"/><circle cx="1181.0" cy="310.5" r="0.35"/><circle cx="1048.4" cy="284.2" r="0.6"/><circle cx="1032.6" cy="248.4" r="0.6"/><circle cx="1153.6" cy="291.3" r="0.3"/><circle cx="1264.5" cy="247.9" r="0.35"/><circle cx="1080.2" cy="310.2" r="0.5"/><circle cx="1133.5" cy="245.4" r="0.3"/><circle cx="1130.7" cy="296.3" r="0.5"/><circle cx="1180.3" cy="260.3" r="0.4"/><circle cx="1133.5" cy="289.4" r="0.45"/><circle cx="1150.4" cy="264.5" r="0.5"/><circle cx="1262.5" cy="325.0" r="0.4"/><circle cx="1276.5" cy="320.7" r="0.35"/><circle cx="1251.4" cy="254.9" r="0.3"/><circle cx="1115.3" cy="270.5" r="0.6"/><circle cx="1069.2" cy="249.4" r="0.6"/><circle cx="1088.0" cy="253.6" r="0.35"/><circle cx="1281.6" cy="299.0" r="0.4"/><circle cx="1039.5" cy="319.8" r="0.45"/><circle cx="1062.8" cy="325.9" r="0.45"/><circle cx="1265.0" cy="257.2" r="0.6"/><circle cx="1249.1" cy="257.0" r="0.45"/><circle cx="1298.2" cy="278.1" r="0.45"/><circle cx="1055.5" cy="270.7" r="0.6"/><circle cx="1107.2" cy="272.4" r="0.45"/><circle cx="1129.9" cy="244.6" r="0.4"/><circle cx="1153.3" cy="268.7" r="0.3"/><circle cx="1030.3" cy="322.9" r="0.35"/><circle cx="1291.4" cy="252.1" r="0.4"/><circle cx="1078.7" cy="321.8" r="0.35"/><circle cx="1078.2" cy="254.3" r="0.45"/><circle cx="1254.3" cy="301.8" r="0.4"/><circle cx="1119.4" cy="289.7" r="0.5"/><circle cx="1169.5" cy="303.9" r="0.3"/><circle cx="1080.8" cy="312.6" r="0.35"/><circle cx="1125.3" cy="249.3" r="0.3"/><circle cx="1188.9" cy="312.7" r="0.3"/><circle cx="1180.9" cy="262.3" r="0.4"/><circle cx="1258.3" cy="282.5" r="0.4"/><circle cx="1298.3" cy="279.3" r="0.4"/><circle cx="1185.0" cy="246.8" r="0.6"/><circle cx="1068.5" cy="252.5" r="0.35"/><circle cx="1075.6" cy="258.8" r="0.4"/><circle cx="1187.1" cy="289.2" r="0.35"/><circle cx="1084.1" cy="286.5" r="0.35"/><circle cx="1078.2" cy="312.9" r="0.4"/><circle cx="1007.2" cy="244.6" r="0.5"/><circle cx="1163.5" cy="259.5" r="0.45"/><circle cx="1070.7" cy="281.9" r="0.6"/><circle cx="1245.0" cy="280.6" r="0.45"/><circle cx="1162.0" cy="320.3" r="0.5"/><circle cx="1089.6" cy="261.7" r="0.35"/><circle cx="1100.2" cy="315.4" r="0.6"/><circle cx="1217.6" cy="255.2" r="0.4"/><circle cx="1294.5" cy="315.8" r="0.3"/><circle cx="1017.5" cy="307.5" r="0.4"/><circle cx="1126.9" cy="247.8" r="0.6"/><circle cx="1251.7" cy="318.7" r="0.6"/><circle cx="1291.2" cy="295.1" r="0.6"/><circle cx="1085.1" cy="283.0" r="0.35"/><circle cx="1077.8" cy="243.3" r="0.4"/><circle cx="1288.4" cy="327.6" r="0.5"/><circle cx="1094.4" cy="246.0" r="0.4"/><circle cx="1062.2" cy="258.9" r="0.4"/><circle cx="1112.0" cy="284.3" r="0.5"/><circle cx="1195.4" cy="264.6" r="0.3"/><circle cx="1023.6" cy="314.1" r="0.35"/><circle cx="1117.5" cy="246.6" r="0.3"/><circle cx="1087.1" cy="297.8" r="0.3"/><circle cx="1174.0" cy="289.0" r="0.35"/><circle cx="1195.9" cy="305.3" r="0.5"/><circle cx="1114.4" cy="271.4" r="0.45"/><circle cx="1041.4" cy="306.0" r="0.6"/><circle cx="1040.0" cy="314.8" r="0.6"/><circle cx="1267.2" cy="297.6" r="0.6"/><circle cx="1209.1" cy="287.0" r="0.5"/><circle cx="1224.9" cy="292.5" r="0.3"/><circle cx="1247.2" cy="293.8" r="0.6"/><circle cx="1203.6" cy="303.3" r="0.35"/><circle cx="1021.9" cy="246.6" r="0.6"/><circle cx="1105.7" cy="252.1" r="0.45"/><circle cx="1165.8" cy="297.6" r="0.6"/><circle cx="1157.6" cy="264.3" r="0.4"/><circle cx="997.0" cy="312.4" r="0.6"/><circle cx="1279.5" cy="321.1" r="0.3"/><circle cx="1196.4" cy="248.7" r="0.6"/><circle cx="1140.1" cy="313.4" r="0.4"/><circle cx="1067.4" cy="308.8" r="0.35"/><circle cx="1220.9" cy="327.9" r="0.45"/><circle cx="1253.0" cy="249.7" r="0.6"/><circle cx="1083.3" cy="247.1" r="0.6"/><circle cx="1191.4" cy="249.7" r="0.35"/><circle cx="1096.9" cy="299.7" r="0.6"/><circle cx="1088.5" cy="292.4" r="0.3"/><circle cx="1142.7" cy="285.3" r="0.6"/><circle cx="1026.3" cy="261.9" r="0.45"/><circle cx="1084.4" cy="287.9" r="0.45"/><circle cx="1137.6" cy="309.7" r="0.5"/><circle cx="1056.6" cy="328.1" r="0.45"/><circle cx="1001.3" cy="282.9" r="0.5"/><circle cx="1290.3" cy="282.1" r="0.4"/><circle cx="1113.6" cy="322.7" r="0.35"/><circle cx="1018.7" cy="250.9" r="0.6"/><circle cx="1155.3" cy="325.9" r="0.35"/><circle cx="1179.4" cy="298.0" r="0.4"/><circle cx="1265.6" cy="304.2" r="0.35"/><circle cx="1147.4" cy="319.2" r="0.45"/><circle cx="1003.5" cy="243.3" r="0.45"/><circle cx="1203.2" cy="278.3" r="0.6"/><circle cx="1038.8" cy="272.9" r="0.4"/><circle cx="1032.8" cy="271.8" r="0.4"/><circle cx="1224.2" cy="316.0" r="0.3"/><circle cx="1281.7" cy="260.0" r="0.3"/><circle cx="1270.1" cy="268.2" r="0.4"/><circle cx="1015.8" cy="276.9" r="0.5"/><circle cx="1019.2" cy="323.5" r="0.4"/><circle cx="1255.7" cy="267.4" r="0.3"/><circle cx="1249.7" cy="267.8" r="0.35"/><circle cx="1071.8" cy="266.1" r="0.5"/><circle cx="1091.9" cy="310.3" r="0.45"/><circle cx="1264.8" cy="313.6" r="0.6"/><circle cx="1117.6" cy="319.2" r="0.5"/><circle cx="1163.0" cy="305.6" r="0.3"/><circle cx="1279.8" cy="278.7" r="0.5"/><circle cx="1224.8" cy="299.1" r="0.4"/><circle cx="1143.6" cy="322.3" r="0.5"/><circle cx="1034.7" cy="284.1" r="0.4"/><circle cx="1081.7" cy="265.2" r="0.6"/><circle cx="1292.8" cy="265.6" r="0.6"/><circle cx="1068.6" cy="285.0" r="0.6"/><circle cx="1115.9" cy="257.6" r="0.35"/><circle cx="1018.9" cy="286.6" r="0.45"/><circle cx="1163.3" cy="282.4" r="0.4"/><circle cx="1298.9" cy="282.1" r="0.35"/><circle cx="1162.5" cy="264.2" r="0.35"/><circle cx="1100.0" cy="250.9" r="0.35"/><circle cx="1108.0" cy="313.4" r="0.35"/><circle cx="1265.7" cy="308.2" r="0.45"/><circle cx="1112.4" cy="307.9" r="0.35"/><circle cx="1110.6" cy="272.4" r="0.3"/><circle cx="1147.4" cy="293.0" r="0.4"/><circle cx="1034.3" cy="286.8" r="0.6"/><circle cx="1236.3" cy="316.8" r="0.3"/><circle cx="1078.4" cy="264.6" r="0.45"/><circle cx="1192.3" cy="280.6" r="0.4"/><circle cx="1254.0" cy="318.9" r="0.3"/><circle cx="1034.7" cy="280.0" r="0.45"/><circle cx="1290.4" cy="285.6" r="0.3"/><circle cx="1115.0" cy="323.6" r="0.5"/><circle cx="1256.1" cy="327.6" r="0.35"/><circle cx="1234.1" cy="262.5" r="0.35"/><circle cx="1154.8" cy="302.3" r="0.6"/><circle cx="1209.1" cy="316.6" r="0.45"/><circle cx="1021.8" cy="310.6" r="0.3"/><circle cx="1233.8" cy="263.2" r="0.3"/><circle cx="1192.2" cy="269.4" r="0.35"/><circle cx="1186.4" cy="289.0" r="0.45"/><circle cx="1208.4" cy="252.8" r="0.3"/><circle cx="1087.3" cy="325.1" r="0.35"/><circle cx="1114.0" cy="262.5" r="0.5"/><circle cx="996.4" cy="289.8" r="0.45"/><circle cx="1080.7" cy="270.5" r="0.35"/></g><circle cx="1188" cy="338" r="37" fill="url(#moon)"/><path d="M1153 330 A37 37 0 0 1 1210 308" fill="none" stroke="#7cc0f8" stroke-opacity=".95" stroke-width="1.6" filter="url(#b1)"/><g filter="url(#b1)"><path d="M1216 242 L1144 281" stroke="url(#c1)" stroke-width="7" stroke-linecap="round"/><path d="M1280 241 L1187 289.5" stroke="url(#c2)" stroke-width="8" stroke-linecap="round"/><circle cx="1145" cy="280.2" r="2.6" fill="#d8ffff"/><circle cx="1188" cy="288.6" r="3.2" fill="#e4ffff"/></g><circle cx="1499" cy="485" r="345" fill="url(#halo)"/><circle cx="1499" cy="485" r="317" fill="url(#planet)"/><circle cx="1499" cy="485" r="306" fill="#fff" filter="url(#swirl)" opacity=".6"/><circle cx="1499" cy="485" r="317" fill="url(#pshade)"/><ellipse cx="1330" cy="392" rx="70" ry="26" fill="#2f86dc" fill-opacity=".75" filter="url(#b4)"/><g filter="url(#cloudf)"><path d="M990,351 L1000,349 L1025,343 L1045,327 L1055,321 L1090,327 L1130,325 L1155,327 L1190,332 L1210,342 L1230,352 L1260,365 L1290,368 L1320,376 L1350,385 L1365,389 L1365,414 L1330,414 L1290,404 L1260,397 L1232,384 L1214,372 L1196,376 L1178,386 L1140,387 L1090,387 L1040,387 L990,382Z" fill="#8494aa"/></g><g filter="url(#cloudf)"><g fill="#ffffff"><ellipse cx="994.0" cy="351.9" rx="9.7" ry="7.4"/><ellipse cx="998.6" cy="368.0" rx="6.9" ry="3.7"/><ellipse cx="988.3" cy="359.2" rx="6.7" ry="3.8"/><ellipse cx="1007.6" cy="348.2" rx="8.7" ry="6.7"/><ellipse cx="1006.8" cy="368.6" rx="6.1" ry="3.3"/><ellipse cx="1011.2" cy="356.7" rx="6.6" ry="3.8"/><ellipse cx="1020.7" cy="345.0" rx="8.7" ry="6.7"/><ellipse cx="1018.7" cy="373.1" rx="6.8" ry="3.6"/><ellipse cx="1017.0" cy="358.5" rx="7.5" ry="4.3"/><ellipse cx="1031.7" cy="338.6" rx="8.6" ry="6.6"/><ellipse cx="1027.2" cy="364.0" rx="9.7" ry="5.1"/><ellipse cx="1036.5" cy="354.0" rx="4.4" ry="2.5"/><ellipse cx="1041.6" cy="332.6" rx="11.4" ry="8.8"/><ellipse cx="1043.3" cy="359.5" rx="8.8" ry="4.7"/><ellipse cx="1039.6" cy="349.2" rx="5.5" ry="3.2"/><ellipse cx="1051.2" cy="326.3" rx="11.6" ry="8.9"/><ellipse cx="1054.5" cy="362.2" rx="6.8" ry="3.6"/><ellipse cx="1045.8" cy="346.3" rx="7.1" ry="4.0"/><ellipse cx="1064.7" cy="323.1" rx="7.9" ry="6.1"/><ellipse cx="1067.4" cy="369.9" rx="7.5" ry="4.0"/><ellipse cx="1059.5" cy="339.1" rx="4.3" ry="2.5"/><ellipse cx="1075.1" cy="327.4" rx="11.5" ry="8.9"/><ellipse cx="1077.3" cy="361.0" rx="8.3" ry="4.4"/><ellipse cx="1069.1" cy="344.4" rx="5.3" ry="3.0"/><ellipse cx="1085.3" cy="327.9" rx="9.7" ry="7.4"/><ellipse cx="1084.1" cy="373.1" rx="9.6" ry="5.1"/><ellipse cx="1085.2" cy="348.0" rx="5.1" ry="2.9"/><ellipse cx="1098.1" cy="328.6" rx="10.2" ry="7.8"/><ellipse cx="1096.7" cy="362.8" rx="7.2" ry="3.9"/><ellipse cx="1094.5" cy="342.5" rx="6.9" ry="4.0"/><ellipse cx="1108.7" cy="329.1" rx="11.6" ry="8.9"/><ellipse cx="1106.4" cy="373.6" rx="9.3" ry="5.0"/><ellipse cx="1108.7" cy="342.4" rx="4.5" ry="2.6"/><ellipse cx="1121.1" cy="327.9" rx="10.7" ry="8.2"/><ellipse cx="1117.3" cy="368.1" rx="9.2" ry="4.9"/><ellipse cx="1121.9" cy="345.3" rx="7.1" ry="4.1"/><ellipse cx="1130.9" cy="327.9" rx="11.2" ry="8.7"/><ellipse cx="1129.8" cy="362.3" rx="8.2" ry="4.4"/><ellipse cx="1127.7" cy="348.6" rx="7.7" ry="4.4"/><ellipse cx="1144.0" cy="328.8" rx="11.1" ry="8.5"/><ellipse cx="1141.9" cy="358.0" rx="9.4" ry="5.0"/><ellipse cx="1149.7" cy="344.0" rx="4.6" ry="2.6"/><ellipse cx="1154.3" cy="329.4" rx="10.8" ry="8.3"/><ellipse cx="1155.2" cy="359.2" rx="9.5" ry="5.1"/><ellipse cx="1152.7" cy="344.9" rx="6.4" ry="3.6"/><ellipse cx="1164.3" cy="328.8" rx="7.8" ry="6.0"/><ellipse cx="1161.1" cy="368.7" rx="7.2" ry="3.9"/><ellipse cx="1167.8" cy="345.4" rx="5.3" ry="3.0"/><ellipse cx="1176.5" cy="330.7" rx="8.2" ry="6.3"/><ellipse cx="1175.6" cy="369.2" rx="6.6" ry="3.5"/><ellipse cx="1181.9" cy="348.0" rx="5.2" ry="3.0"/><ellipse cx="1190.5" cy="333.6" rx="9.2" ry="7.1"/><ellipse cx="1187.5" cy="365.2" rx="6.7" ry="3.6"/><ellipse cx="1189.6" cy="354.5" rx="4.2" ry="2.4"/><ellipse cx="1199.6" cy="338.7" rx="10.0" ry="7.7"/><ellipse cx="1195.4" cy="365.5" rx="8.4" ry="4.5"/><ellipse cx="1199.6" cy="348.8" rx="6.4" ry="3.6"/><ellipse cx="1211.0" cy="345.1" rx="10.9" ry="8.4"/><ellipse cx="1207.3" cy="358.6" rx="9.6" ry="5.1"/><ellipse cx="1210.8" cy="356.6" rx="7.5" ry="4.3"/><ellipse cx="1224.1" cy="349.9" rx="8.4" ry="6.5"/><ellipse cx="1223.2" cy="365.1" rx="8.9" ry="4.8"/><ellipse cx="1220.3" cy="361.7" rx="7.2" ry="4.1"/><ellipse cx="1234.4" cy="356.2" rx="10.6" ry="8.2"/><ellipse cx="1235.0" cy="369.2" rx="9.4" ry="5.0"/><ellipse cx="1238.4" cy="360.1" rx="6.9" ry="3.9"/><ellipse cx="1245.5" cy="360.7" rx="10.1" ry="7.7"/><ellipse cx="1244.9" cy="379.8" rx="7.6" ry="4.1"/><ellipse cx="1246.9" cy="364.9" rx="5.7" ry="3.3"/><ellipse cx="1255.4" cy="364.7" rx="9.6" ry="7.4"/><ellipse cx="1254.7" cy="379.4" rx="6.4" ry="3.4"/><ellipse cx="1255.5" cy="373.1" rx="4.5" ry="2.6"/><ellipse cx="1266.9" cy="366.2" rx="8.0" ry="6.2"/><ellipse cx="1271.4" cy="385.1" rx="7.9" ry="4.2"/><ellipse cx="1272.9" cy="380.2" rx="4.7" ry="2.7"/><ellipse cx="1280.7" cy="369.9" rx="11.4" ry="8.7"/><ellipse cx="1285.0" cy="391.8" rx="6.6" ry="3.5"/><ellipse cx="1283.8" cy="377.5" rx="4.4" ry="2.5"/><ellipse cx="1292.2" cy="371.5" rx="11.4" ry="8.8"/><ellipse cx="1292.3" cy="388.8" rx="6.8" ry="3.6"/><ellipse cx="1288.4" cy="376.3" rx="5.3" ry="3.0"/><ellipse cx="1305.1" cy="372.7" rx="8.2" ry="6.3"/><ellipse cx="1303.7" cy="395.9" rx="8.0" ry="4.3"/><ellipse cx="1306.1" cy="384.9" rx="7.3" ry="4.1"/><ellipse cx="1318.1" cy="376.6" rx="8.8" ry="6.8"/><ellipse cx="1316.7" cy="398.6" rx="9.7" ry="5.2"/><ellipse cx="1314.2" cy="387.1" rx="6.9" ry="3.9"/><ellipse cx="1332.0" cy="381.6" rx="10.1" ry="7.8"/><ellipse cx="1327.1" cy="399.4" rx="8.5" ry="4.5"/><ellipse cx="1333.4" cy="387.9" rx="4.3" ry="2.5"/><ellipse cx="1344.3" cy="383.8" rx="7.9" ry="6.1"/><ellipse cx="1340.4" cy="401.1" rx="6.0" ry="3.2"/><ellipse cx="1345.3" cy="391.0" rx="5.5" ry="3.1"/><ellipse cx="1358.0" cy="388.2" rx="8.7" ry="6.7"/><ellipse cx="1359.4" cy="400.4" rx="6.6" ry="3.5"/><ellipse cx="1356.8" cy="397.9" rx="7.2" ry="4.1"/><ellipse cx="1030" cy="326" rx="12" ry="4"/><ellipse cx="1016" cy="336" rx="7" ry="2.5"/></g></g><g filter="url(#cloudf)" opacity=".8"><g fill="#28303f" filter="url(#b1)"><ellipse cx="993.0" cy="365.6" rx="8.8" ry="3.0"/><ellipse cx="996.0" cy="379.1" rx="9.9" ry="2.7"/><ellipse cx="1004.1" cy="363.3" rx="9.9" ry="3.4"/><ellipse cx="1005.4" cy="376.9" rx="11.2" ry="3.1"/><ellipse cx="1022.7" cy="361.2" rx="7.5" ry="2.6"/><ellipse cx="1016.5" cy="378.3" rx="8.4" ry="2.3"/><ellipse cx="1037.7" cy="360.8" rx="10.6" ry="3.7"/><ellipse cx="1029.6" cy="379.5" rx="12.0" ry="3.3"/><ellipse cx="1039.0" cy="348.7" rx="7.2" ry="2.5"/><ellipse cx="1047.1" cy="383.2" rx="8.1" ry="2.3"/><ellipse cx="1056.3" cy="348.9" rx="8.7" ry="3.0"/><ellipse cx="1049.6" cy="384.0" rx="9.8" ry="2.7"/><ellipse cx="1067.7" cy="347.1" rx="10.8" ry="3.7"/><ellipse cx="1062.8" cy="380.5" rx="12.2" ry="3.4"/><ellipse cx="1076.7" cy="356.2" rx="10.0" ry="3.4"/><ellipse cx="1069.4" cy="380.3" rx="11.3" ry="3.1"/><ellipse cx="1088.9" cy="348.4" rx="10.9" ry="3.7"/><ellipse cx="1089.1" cy="381.3" rx="12.2" ry="3.4"/><ellipse cx="1092.9" cy="349.4" rx="10.0" ry="3.4"/><ellipse cx="1098.8" cy="384.8" rx="11.3" ry="3.1"/><ellipse cx="1105.6" cy="351.5" rx="9.8" ry="3.4"/><ellipse cx="1110.2" cy="382.9" rx="11.0" ry="3.1"/><ellipse cx="1117.5" cy="354.6" rx="8.2" ry="2.8"/><ellipse cx="1118.1" cy="383.8" rx="9.2" ry="2.6"/><ellipse cx="1136.8" cy="353.4" rx="10.3" ry="3.5"/><ellipse cx="1130.6" cy="384.5" rx="11.6" ry="3.2"/><ellipse cx="1142.4" cy="357.2" rx="9.2" ry="3.2"/><ellipse cx="1143.4" cy="380.6" rx="10.3" ry="2.9"/><ellipse cx="1151.3" cy="349.0" rx="7.1" ry="2.4"/><ellipse cx="1156.1" cy="381.6" rx="8.0" ry="2.2"/><ellipse cx="1159.5" cy="348.2" rx="9.0" ry="3.1"/><ellipse cx="1164.9" cy="382.4" rx="10.2" ry="2.8"/><ellipse cx="1174.8" cy="354.8" rx="7.9" ry="2.7"/><ellipse cx="1180.9" cy="382.0" rx="8.9" ry="2.5"/><ellipse cx="1195.1" cy="351.6" rx="10.3" ry="3.6"/><ellipse cx="1186.4" cy="374.8" rx="11.6" ry="3.2"/><ellipse cx="1199.8" cy="351.9" rx="7.1" ry="2.4"/><ellipse cx="1194.9" cy="368.6" rx="8.0" ry="2.2"/><ellipse cx="1209.7" cy="358.6" rx="6.7" ry="2.3"/><ellipse cx="1212.4" cy="366.1" rx="7.5" ry="2.1"/><ellipse cx="1224.3" cy="361.7" rx="7.4" ry="2.6"/><ellipse cx="1219.6" cy="374.8" rx="8.4" ry="2.3"/><ellipse cx="1235.0" cy="368.4" rx="7.0" ry="2.4"/><ellipse cx="1232.0" cy="380.0" rx="7.8" ry="2.2"/><ellipse cx="1248.6" cy="370.9" rx="8.7" ry="3.0"/><ellipse cx="1245.0" cy="384.4" rx="9.8" ry="2.7"/><ellipse cx="1250.3" cy="378.0" rx="6.6" ry="2.3"/><ellipse cx="1258.7" cy="389.2" rx="7.4" ry="2.1"/><ellipse cx="1263.2" cy="382.4" rx="9.9" ry="3.4"/><ellipse cx="1266.8" cy="391.7" rx="11.2" ry="3.1"/><ellipse cx="1278.0" cy="385.2" rx="7.2" ry="2.5"/><ellipse cx="1276.4" cy="395.8" rx="8.1" ry="2.2"/><ellipse cx="1294.4" cy="387.6" rx="7.2" ry="2.5"/><ellipse cx="1288.2" cy="398.1" rx="8.1" ry="2.2"/><ellipse cx="1311.1" cy="384.8" rx="10.6" ry="3.7"/><ellipse cx="1303.9" cy="402.6" rx="12.0" ry="3.3"/><ellipse cx="1322.0" cy="387.8" rx="10.0" ry="3.4"/><ellipse cx="1319.8" cy="407.8" rx="11.2" ry="3.1"/><ellipse cx="1336.8" cy="394.9" rx="8.5" ry="2.9"/><ellipse cx="1328.8" cy="411.3" rx="9.5" ry="2.6"/><ellipse cx="1345.8" cy="395.0" rx="9.2" ry="3.2"/><ellipse cx="1339.9" cy="409.6" rx="10.4" ry="2.9"/><ellipse cx="1359.7" cy="396.4" rx="7.7" ry="2.6"/><ellipse cx="1356.2" cy="409.2" rx="8.6" ry="2.4"/></g></g><g filter="url(#cloudf)" opacity=".7"><path d="M990,351 L1000,349 L1025,343 L1045,327 L1055,321 L1090,327 L1130,325 L1155,327 L1190,332 L1210,342 L1230,352 L1260,365 L1290,368 L1320,376 L1350,385 L1365,389 L1365,414 L1330,414 L1290,404 L1260,397 L1232,384 L1214,372 L1196,376 L1178,386 L1140,387 L1090,387 L1040,387 L990,382Z" filter="url(#cloudshade)"/></g><path d="M996 384 L1200 384 L1359 424 L1359 432 L1200 400 L996 392Z" fill="#e4f2ea" fill-opacity=".8" filter="url(#b2)"/><polygon points="1255,410 1272,406 1285,402 1298,410 1312,414 1330,411 1342,414 1352,408 1359,410 1359,490 1255,490" fill="url(#bmtn)"/><g stroke="#3a78c8" stroke-opacity=".55" stroke-width="1.5" fill="none" filter="url(#b1)"><path d="M1285 403 L1300 428 L1312 450"/><path d="M1330 412 L1340 440 L1350 462"/><path d="M1352 409 L1359 420"/></g><polygon points="1296,412 1359,440 1359,490 1330,490" fill="#0b2f78" fill-opacity=".55" filter="url(#b2)"/><polygon points="990,384 1010,382 1030,381 1046,386 1060,392 1060,402 990,404" fill="#1a5560"/><polygon points="990,400 1040,393 1062,390 1082,388 1105,384.5 1128,388 1150,387 1175,388 1192,387 1196,385 1203,389 1230,390 1246,396 1262,404 1280,420 1300,445 1314,468 1326,500 1326,520 990,540" fill="url(#mtn)"/><polygon points="990,400 1040,393 1105,385 1196,386 1262,404 1300,445 1326,500 990,530" fill="#000" filter="url(#patch)" opacity=".2"/><g fill="#2aa81a" filter="url(#patchf)"><ellipse cx="1030" cy="401" rx="18.7" ry="1.4"/><ellipse cx="1060" cy="405" rx="8.5" ry="1.2"/><ellipse cx="1017" cy="411" rx="6.8" ry="1.2"/><ellipse cx="1120" cy="404" rx="6.8" ry="1.2"/><ellipse cx="1190" cy="430" rx="13.6" ry="1.6"/><ellipse cx="1215" cy="424" rx="6.8" ry="1.2"/><ellipse cx="1236" cy="428" rx="8.5" ry="1.6"/><ellipse cx="1048" cy="440" rx="7.6" ry="2.0"/><ellipse cx="1062" cy="452" rx="11.9" ry="2.8"/><ellipse cx="1040" cy="456" rx="6.8" ry="1.6"/><ellipse cx="1086" cy="462" rx="7.6" ry="2.0"/><ellipse cx="1020" cy="466" rx="13.6" ry="2.0"/><ellipse cx="1006" cy="478" rx="8.5" ry="2.4"/><ellipse cx="1040" cy="480" rx="11.9" ry="2.0"/><ellipse cx="1070" cy="476" rx="6.8" ry="1.6"/><ellipse cx="1118" cy="446" rx="10.2" ry="2.4"/><ellipse cx="1136" cy="454" rx="11.9" ry="4.0"/><ellipse cx="1158" cy="448" rx="8.5" ry="2.4"/><ellipse cx="1150" cy="466" rx="13.6" ry="4.0"/><ellipse cx="1172" cy="458" rx="8.5" ry="4.0"/><ellipse cx="1128" cy="470" rx="8.5" ry="2.4"/><ellipse cx="1110" cy="482" rx="8.5" ry="2.0"/><ellipse cx="1140" cy="486" rx="11.9" ry="2.4"/><ellipse cx="1186" cy="468" rx="10.2" ry="5.6"/><ellipse cx="1204" cy="476" rx="10.2" ry="7.2"/><ellipse cx="1216" cy="488" rx="8.5" ry="4.8"/><ellipse cx="1196" cy="492" rx="11.9" ry="3.2"/><ellipse cx="1170" cy="484" rx="8.5" ry="2.4"/><ellipse cx="1236" cy="470" rx="5.1" ry="3.2"/><ellipse cx="1250" cy="444" rx="5.1" ry="1.6"/><ellipse cx="1292" cy="452" rx="6.8" ry="2.0"/><ellipse cx="1302" cy="470" rx="6.0" ry="4.0"/><ellipse cx="1290" cy="486" rx="8.5" ry="4.0"/><ellipse cx="1312" cy="488" rx="5.1" ry="4.8"/><ellipse cx="1264" cy="420" rx="5.1" ry="1.2"/></g><g fill="#4ccc26" filter="url(#patchf)"><ellipse cx="1140" cy="456" rx="8" ry="2.5"/><ellipse cx="1152" cy="468" rx="9" ry="2.5"/><ellipse cx="1190" cy="470" rx="7" ry="4"/><ellipse cx="1205" cy="480" rx="7" ry="5"/><ellipse cx="1064" cy="453" rx="8" ry="2"/><ellipse cx="1030" cy="401" rx="12" ry="1"/></g><path d="M1010 487 L1040 492 L1076 498 M1150 500 L1190 502 L1225 498" stroke="#d8e0b0" stroke-opacity=".55" stroke-width="1.2" fill="none" stroke-dasharray="2 2"/><g fill="#17947e"><polygon points="996,487 1020,489 1050,494 1078,499 1079,512 1064,518 1040,522 996,524"/><polygon points="1118,504 1156,504 1152,520 1122,521"/><polygon points="1190,503 1226,501 1224,508 1192,510"/></g><path d="M996 488 L1040 492 L1078 499" stroke="#c8d8c0" stroke-opacity=".5" stroke-width="1" fill="none"/><polygon points="996,529 1060,528 1120,524 1180,518 1240,512 1300,507 1359,503 1359,615 996,615" fill="url(#grass)"/><polygon points="996,529 1060,528 1120,524 1180,518 1240,512 1300,507 1359,503 1359,615 996,615" fill="#000" filter="url(#grassn)"/><polygon points="996,529 1060,528 1120,524 1180,518 1240,512 1300,507 1359,503 1359,615 996,615" fill="#000" filter="url(#grassl)" opacity=".45"/><ellipse cx="1240" cy="556" rx="170" ry="42" fill="#48d418" fill-opacity=".5" filter="url(#b4)"/><polygon points="996,529 1060,528 1120,524 1180,518 1240,512 1300,507 1359,503 1359,615 996,615" fill="url(#gleft)"/><ellipse cx="1070" cy="544" rx="140" ry="12" fill="#0e6a08" fill-opacity=".28" filter="url(#b4)"/><polygon points="996,516 1010,512 1024,516 1040,512 1050,516 1062,519 1074,517 1084,512 1096,514 1108,510 1120,514 1134,517 1146,515 1158,516 1170,512 1182,513 1196,511 1208,512 1220,508 1232,506 1290,500 1300,498 1312,494 1330,492 1345,490 1359,488 1359,504 1300,508 1240,513 1180,519 1120,525 1060,529 996,530" fill="#0a3a18"/><polygon points="1003.0,500.0 1006.4,504.3 1005.1,503.8 1008.1,508.6 1006.2,508.1 1009.5,512.9 1007.0,512.3 1010.7,517.1 1007.8,516.6 1011.8,521.4 1008.5,520.9 1012.8,525.7 1009.1,525.2 1011.6,530.0 994.4,530.0 996.9,525.2 993.2,525.7 997.5,520.9 994.2,521.4 998.2,516.6 995.3,517.1 999.0,512.3 996.5,512.9 999.8,508.1 997.9,508.6 1000.9,503.8 999.6,504.3" fill="#0f4a1a"/><polygon points="1016.0,490.0 1018.5,495.6 1017.6,494.9 1019.8,501.1 1018.4,500.5 1020.9,506.7 1019.0,506.0 1021.8,512.3 1019.6,511.6 1022.6,517.9 1020.1,517.2 1023.4,523.4 1020.6,522.8 1022.5,529.0 1009.5,529.0 1011.4,522.8 1008.6,523.4 1011.9,517.2 1009.4,517.9 1012.4,511.6 1010.2,512.3 1013.0,506.0 1011.1,506.7 1013.6,500.5 1012.2,501.1 1014.4,494.9 1013.5,495.6" fill="#072e14"/><polygon points="1028.0,487.0 1031.8,493.0 1030.3,492.3 1033.7,499.0 1031.6,498.3 1035.3,505.0 1032.5,504.3 1036.7,511.0 1033.4,510.3 1037.9,517.0 1034.2,516.3 1039.1,523.0 1034.9,522.3 1037.7,529.0 1018.3,529.0 1021.1,522.3 1016.9,523.0 1021.8,516.3 1018.1,517.0 1022.6,510.3 1019.3,511.0 1023.5,504.3 1020.7,505.0 1024.4,498.3 1022.3,499.0 1025.7,492.3 1024.2,493.0" fill="#06280f"/><polygon points="1040.0,496.0 1042.5,500.7 1041.6,500.1 1043.8,505.4 1042.4,504.9 1044.9,510.1 1043.0,509.6 1045.8,514.9 1043.6,514.3 1046.6,519.6 1044.1,519.0 1047.4,524.3 1044.6,523.7 1046.5,529.0 1033.5,529.0 1035.4,523.7 1032.6,524.3 1035.9,519.0 1033.4,519.6 1036.4,514.3 1034.2,514.9 1037.0,509.6 1035.1,510.1 1037.6,504.9 1036.2,505.4 1038.4,500.1 1037.5,500.7" fill="#0a3a16"/><polygon points="1052.0,512.0 1054.9,514.4 1053.8,514.1 1056.5,516.9 1054.8,516.6 1057.7,519.3 1055.5,519.0 1058.8,521.7 1056.2,521.4 1059.7,524.1 1056.8,523.9 1060.6,526.6 1057.3,526.3 1059.6,529.0 1044.4,529.0 1046.7,526.3 1043.4,526.6 1047.2,523.9 1044.3,524.1 1047.8,521.4 1045.2,521.7 1048.5,519.0 1046.3,519.3 1049.2,516.6 1047.5,516.9 1050.2,514.1 1049.1,514.4" fill="#0c4018"/><polygon points="1066.0,514.0 1068.9,516.0 1067.8,515.8 1070.5,518.0 1068.8,517.8 1071.7,520.0 1069.5,519.8 1072.8,522.0 1070.2,521.8 1073.7,524.0 1070.8,523.8 1074.6,526.0 1071.3,525.8 1073.6,528.0 1058.4,528.0 1060.7,525.8 1057.4,526.0 1061.2,523.8 1058.3,524.0 1061.8,521.8 1059.2,522.0 1062.5,519.8 1060.3,520.0 1063.2,517.8 1061.5,518.0 1064.2,515.8 1063.1,516.0" fill="#0a3614"/><polygon points="1080.0,498.0 1082.9,502.1 1081.8,501.6 1084.5,506.3 1082.8,505.8 1085.7,510.4 1083.5,509.9 1086.8,514.6 1084.2,514.1 1087.7,518.7 1084.8,518.2 1088.6,522.9 1085.3,522.4 1087.6,527.0 1072.4,527.0 1074.7,522.4 1071.4,522.9 1075.2,518.2 1072.3,518.7 1075.8,514.1 1073.2,514.6 1076.5,509.9 1074.3,510.4 1077.2,505.8 1075.5,506.3 1078.2,501.6 1077.1,502.1" fill="#083214"/><polygon points="1088.0,488.0 1091.4,493.6 1090.1,492.9 1093.1,499.1 1091.2,498.5 1094.5,504.7 1092.0,504.0 1095.7,510.3 1092.8,509.6 1096.8,515.9 1093.5,515.2 1097.8,521.4 1094.1,520.8 1096.6,527.0 1079.4,527.0 1081.9,520.8 1078.2,521.4 1082.5,515.2 1079.2,515.9 1083.2,509.6 1080.3,510.3 1084.0,504.0 1081.5,504.7 1084.8,498.5 1082.9,499.1 1085.9,492.9 1084.6,493.6" fill="#06280f"/><polygon points="1100.0,500.0 1102.9,503.7 1101.8,503.3 1104.5,507.4 1102.8,507.0 1105.7,511.1 1103.5,510.7 1106.8,514.9 1104.2,514.4 1107.7,518.6 1104.8,518.1 1108.6,522.3 1105.3,521.8 1107.6,526.0 1092.4,526.0 1094.7,521.8 1091.4,522.3 1095.2,518.1 1092.3,518.6 1095.8,514.4 1093.2,514.9 1096.5,510.7 1094.3,511.1 1097.2,507.0 1095.5,507.4 1098.2,503.3 1097.1,503.7" fill="#0a3a16"/><polygon points="1110.0,493.0 1113.8,497.7 1112.3,497.1 1115.7,502.4 1113.6,501.9 1117.3,507.1 1114.5,506.6 1118.7,511.9 1115.4,511.3 1119.9,516.6 1116.2,516.0 1121.1,521.3 1116.9,520.7 1119.7,526.0 1100.3,526.0 1103.1,520.7 1098.9,521.3 1103.8,516.0 1100.1,516.6 1104.6,511.3 1101.3,511.9 1105.5,506.6 1102.7,507.1 1106.4,501.9 1104.3,502.4 1107.7,497.1 1106.2,497.7" fill="#062a10"/><polygon points="1121.0,506.0 1123.5,508.7 1122.6,508.4 1124.8,511.4 1123.4,511.1 1125.9,514.1 1124.0,513.8 1126.8,516.9 1124.6,516.5 1127.6,519.6 1125.1,519.2 1128.4,522.3 1125.6,522.0 1127.5,525.0 1114.5,525.0 1116.4,522.0 1113.6,522.3 1116.9,519.2 1114.4,519.6 1117.4,516.5 1115.2,516.9 1118.0,513.8 1116.1,514.1 1118.6,511.1 1117.2,511.4 1119.4,508.4 1118.5,508.7" fill="#083214"/><polygon points="1134.0,514.0 1136.5,515.4 1135.6,515.3 1137.8,516.9 1136.4,516.7 1138.9,518.3 1137.0,518.1 1139.8,519.7 1137.6,519.5 1140.6,521.1 1138.1,521.0 1141.4,522.6 1138.6,522.4 1140.5,524.0 1127.5,524.0 1129.4,522.4 1126.6,522.6 1129.9,521.0 1127.4,521.1 1130.4,519.5 1128.2,519.7 1131.0,518.1 1129.1,518.3 1131.6,516.7 1130.2,516.9 1132.4,515.3 1131.5,515.4" fill="#0a3614"/><polygon points="1146.0,507.0 1148.1,509.3 1147.3,509.0 1149.2,511.6 1148.0,511.3 1150.1,513.9 1148.5,513.6 1150.8,516.1 1149.0,515.9 1151.5,518.4 1149.4,518.2 1152.2,520.7 1149.8,520.4 1151.4,523.0 1140.6,523.0 1142.2,520.4 1139.8,520.7 1142.6,518.2 1140.5,518.4 1143.0,515.9 1141.2,516.1 1143.5,513.6 1141.9,513.9 1144.0,511.3 1142.8,511.6 1144.7,509.0 1143.9,509.3" fill="#06280f"/><polygon points="1157.0,510.0 1159.1,511.7 1158.3,511.5 1160.2,513.4 1159.0,513.2 1161.1,515.1 1159.5,514.9 1161.8,516.9 1160.0,516.7 1162.5,518.6 1160.4,518.4 1163.2,520.3 1160.8,520.1 1162.4,522.0 1151.6,522.0 1153.2,520.1 1150.8,520.3 1153.6,518.4 1151.5,518.6 1154.0,516.7 1152.2,516.9 1154.5,514.9 1152.9,515.1 1155.0,513.2 1153.8,513.4 1155.7,511.5 1154.9,511.7" fill="#083214"/><polygon points="1167.0,484.0 1169.1,489.3 1168.3,488.7 1170.2,494.6 1169.0,493.9 1171.1,499.9 1169.5,499.2 1171.8,505.1 1170.0,504.5 1172.5,510.4 1170.4,509.8 1173.2,515.7 1170.8,515.1 1172.4,521.0 1161.6,521.0 1163.2,515.1 1160.8,515.7 1163.6,509.8 1161.5,510.4 1164.0,504.5 1162.2,505.1 1164.5,499.2 1162.9,499.9 1165.0,493.9 1163.8,494.6 1165.7,488.7 1164.9,489.3" fill="#06280f"/><polygon points="1178.0,504.0 1180.5,506.3 1179.6,506.0 1181.8,508.6 1180.4,508.3 1182.9,510.9 1181.0,510.6 1183.8,513.1 1181.6,512.9 1184.6,515.4 1182.1,515.2 1185.4,517.7 1182.6,517.4 1184.5,520.0 1171.5,520.0 1173.4,517.4 1170.6,517.7 1173.9,515.2 1171.4,515.4 1174.4,512.9 1172.2,513.1 1175.0,510.6 1173.1,510.9 1175.6,508.3 1174.2,508.6 1176.4,506.0 1175.5,506.3" fill="#0a3614"/><polygon points="1190.0,506.0 1192.5,507.9 1191.6,507.6 1193.8,509.7 1192.4,509.5 1194.9,511.6 1193.0,511.3 1195.8,513.4 1193.6,513.2 1196.6,515.3 1194.1,515.1 1197.4,517.1 1194.6,516.9 1196.5,519.0 1183.5,519.0 1185.4,516.9 1182.6,517.1 1185.9,515.1 1183.4,515.3 1186.4,513.2 1184.2,513.4 1187.0,511.3 1185.1,511.6 1187.6,509.5 1186.2,509.7 1188.4,507.6 1187.5,507.9" fill="#083214"/><polygon points="1202.0,508.0 1204.5,509.4 1203.6,509.3 1205.8,510.9 1204.4,510.7 1206.9,512.3 1205.0,512.1 1207.8,513.7 1205.6,513.5 1208.6,515.1 1206.1,515.0 1209.4,516.6 1206.6,516.4 1208.5,518.0 1195.5,518.0 1197.4,516.4 1194.6,516.6 1197.9,515.0 1195.4,515.1 1198.4,513.5 1196.2,513.7 1199.0,512.1 1197.1,512.3 1199.6,510.7 1198.2,510.9 1200.4,509.3 1199.5,509.4" fill="#0a3a16"/><polygon points="1214.0,500.0 1216.3,502.4 1215.4,502.1 1217.5,504.9 1216.2,504.6 1218.5,507.3 1216.8,507.0 1219.3,509.7 1217.3,509.4 1220.1,512.1 1217.8,511.9 1220.8,514.6 1218.2,514.3 1219.9,517.0 1208.1,517.0 1209.8,514.3 1207.2,514.6 1210.2,511.9 1207.9,512.1 1210.7,509.4 1208.7,509.7 1211.2,507.0 1209.5,507.3 1211.8,504.6 1210.5,504.9 1212.6,502.1 1211.7,502.4" fill="#06280f"/><polygon points="1292.0,482.0 1296.2,486.1 1294.6,485.6 1298.4,490.3 1295.9,489.8 1300.1,494.4 1297.0,493.9 1301.6,498.6 1298.0,498.1 1303.0,502.7 1298.8,502.2 1304.3,506.9 1299.6,506.4 1302.8,511.0 1281.2,511.0 1284.4,506.4 1279.7,506.9 1285.2,502.2 1281.0,502.7 1286.0,498.1 1282.4,498.6 1287.0,493.9 1283.9,494.4 1288.1,489.8 1285.6,490.3 1289.4,485.6 1287.8,486.1" fill="#0a3a14"/><polygon points="1303.0,488.0 1305.5,491.0 1304.6,490.6 1306.8,494.0 1305.4,493.6 1307.9,497.0 1306.0,496.6 1308.8,500.0 1306.6,499.6 1309.6,503.0 1307.1,502.6 1310.4,506.0 1307.6,505.6 1309.5,509.0 1296.5,509.0 1298.4,505.6 1295.6,506.0 1298.9,502.6 1296.4,503.0 1299.4,499.6 1297.2,500.0 1300.0,496.6 1298.1,497.0 1300.6,493.6 1299.2,494.0 1301.4,490.6 1300.5,491.0" fill="#083214"/><polygon points="1314.0,463.0 1317.6,469.4 1316.2,468.7 1319.4,475.9 1317.4,475.1 1320.9,482.3 1318.3,481.5 1322.2,488.7 1319.1,487.9 1323.4,495.1 1319.8,494.4 1324.5,501.6 1320.5,500.8 1323.2,508.0 1304.8,508.0 1307.5,500.8 1303.5,501.6 1308.2,494.4 1304.6,495.1 1308.9,487.9 1305.8,488.7 1309.7,481.5 1307.1,482.3 1310.6,475.1 1308.6,475.9 1311.8,468.7 1310.4,469.4" fill="#052810"/><polygon points="1329.0,470.0 1331.7,475.3 1330.7,474.7 1333.1,480.6 1331.6,479.9 1334.3,485.9 1332.3,485.2 1335.3,491.1 1332.9,490.5 1336.2,496.4 1333.4,495.8 1337.0,501.7 1334.0,501.1 1336.0,507.0 1322.0,507.0 1324.0,501.1 1321.0,501.7 1324.6,495.8 1321.8,496.4 1325.1,490.5 1322.7,491.1 1325.7,485.2 1323.7,485.9 1326.4,479.9 1324.9,480.6 1327.3,474.7 1326.3,475.3" fill="#06300f"/><polygon points="1341.0,474.0 1343.7,478.6 1342.7,478.0 1345.1,483.1 1343.6,482.6 1346.3,487.7 1344.3,487.2 1347.3,492.3 1344.9,491.7 1348.2,496.9 1345.4,496.3 1349.0,501.4 1346.0,500.9 1348.0,506.0 1334.0,506.0 1336.0,500.9 1333.0,501.4 1336.6,496.3 1333.8,496.9 1337.1,491.7 1334.7,492.3 1337.7,487.2 1335.7,487.7 1338.4,482.6 1336.9,483.1 1339.3,478.0 1338.3,478.6" fill="#052810"/><polygon points="1353.0,466.0 1356.4,471.6 1355.1,470.9 1358.1,477.1 1356.2,476.5 1359.5,482.7 1357.0,482.0 1360.7,488.3 1357.8,487.6 1361.8,493.9 1358.5,493.2 1362.8,499.4 1359.1,498.8 1361.6,505.0 1344.4,505.0 1346.9,498.8 1343.2,499.4 1347.5,493.2 1344.2,493.9 1348.2,487.6 1345.3,488.3 1349.0,482.0 1346.5,482.7 1349.8,476.5 1347.9,477.1 1350.9,470.9 1349.6,471.6" fill="#04240e"/><polygon points="1360.0,474.0 1362.1,478.3 1361.3,477.8 1363.2,482.6 1362.0,482.1 1364.1,486.9 1362.5,486.3 1364.8,491.1 1363.0,490.6 1365.5,495.4 1363.4,494.9 1366.2,499.7 1363.8,499.2 1365.4,504.0 1354.6,504.0 1356.2,499.2 1353.8,499.7 1356.6,494.9 1354.5,495.4 1357.0,490.6 1355.2,491.1 1357.5,486.3 1355.9,486.9 1358.0,482.1 1356.8,482.6 1358.7,477.8 1357.9,478.3" fill="#062c16"/><g filter="url(#treef)"><polygon points="1255.0,424.0 1261.2,434.2 1258.8,433.0 1265.4,444.4 1261.4,443.2 1269.0,454.7 1263.7,453.4 1272.4,464.9 1265.8,463.7 1275.6,475.1 1267.8,473.9 1278.6,485.3 1269.6,484.1 1281.5,495.6 1271.4,494.3 1284.3,505.8 1273.2,504.6 1280.6,516.0 1229.4,516.0 1236.8,504.6 1225.7,505.8 1238.6,494.3 1228.5,495.6 1240.4,484.1 1231.4,485.3 1242.2,473.9 1234.4,475.1 1244.2,463.7 1237.6,464.9 1246.3,453.4 1241.0,454.7 1248.6,443.2 1244.6,444.4 1251.2,433.0 1248.8,434.2" fill="#04220c"/><ellipse cx="1255" cy="500" rx="29" ry="13" fill="#04220c"/><ellipse cx="1252" cy="476" rx="20" ry="12" fill="#04220c"/></g><ellipse cx="1266" cy="486" rx="10" ry="14" fill="#0e4a1a" fill-opacity=".55" filter="url(#b2)"/></g></svg>
<div style="position:absolute;left:228px;top:147px;width:768px;height:552px;border-radius:6px 7px 5px 6px;background:linear-gradient(to right,#2193ae 0,#1d8fab 2px,#066f8e 2.4px,#066f8e 762px,#1783a5 764.5px,#2597b6 768px);box-shadow:0 0 0 .6px rgba(10,60,80,.7);"></div>
<div style="position:absolute;left:231px;top:696.2px;width:762px;height:2.8px;background:linear-gradient(to bottom,#066f8e,#1c8aa8);border-radius:0 0 4px 4px;"></div>
<div style="position:absolute;left:228px;top:147px;width:768px;height:26px;border-radius:6px 7px 0 0;background:linear-gradient(to bottom,#1b86a6 0,#3aaecb 1.2px,#36b2cd 6px,#2aa2c1 9px,#1a8bae 14px,#117799 20px,#0f7092 26px);"></div>
<div style="position:absolute;left:229px;top:147px;width:684px;height:5.2px;background:linear-gradient(to bottom,#fdfdfd,#e6eef0);border-radius:5px 0 8px 0;box-shadow:0 .8px 0 #0e7388;"></div>
<svg style="position:absolute;left:900px;top:147px;" width="96" height="26" viewBox="0 0 96 26"><path d="M96 15.5 H22 Q11 15.5 11 26" fill="none" stroke="#46b6d2" stroke-opacity=".5" stroke-width="1.2"/></svg>
<svg style="position:absolute;left:228px;top:152px;" width="30" height="22" viewBox="0 0 30 22"><path d="M0 3 Q12 4 14 21" fill="none" stroke="#0c6784" stroke-opacity=".55" stroke-width="3"/></svg>
<span class="t" style="left:251.00px;top:153.74px;font-size:12px;color:#ffffff;letter-spacing:0.152px;font-weight:bold;text-shadow:0 1px 1px rgba(0,50,70,.6);">Установки</span>
<svg style="position:absolute;left:918px;top:146.5px;" width="78" height="26" viewBox="0 0 78 26"><circle cx="14" cy="12" r="7.6" fill="#1c8dad" stroke="#0f6c8a" stroke-width="1.2"/><circle cx="14" cy="12" r="6.5" fill="none" stroke="#45b2ce" stroke-opacity=".5" stroke-width=".8"/><rect x="11" y="14" width="6" height="2" fill="#8fd8ea"/><circle cx="37" cy="12" r="7.6" fill="#1c8dad" stroke="#0f6c8a" stroke-width="1.2"/><circle cx="37" cy="12" r="6.5" fill="none" stroke="#45b2ce" stroke-opacity=".5" stroke-width=".8"/><rect x="33.6" y="8.8" width="6.8" height="6.4" fill="none" stroke="#8fd8ea" stroke-width="1.2"/><rect x="33.6" y="8.8" width="6.8" height="1.4" fill="#8fd8ea"/><circle cx="60" cy="12" r="7.6" fill="#1c8dad" stroke="#0f6c8a" stroke-width="1.2"/><circle cx="60" cy="12" r="6.5" fill="none" stroke="#45b2ce" stroke-opacity=".5" stroke-width=".8"/><path d="M56.8 8.8 L63.2 15.2 M63.2 8.8 L56.8 15.2" stroke="#ffffff" stroke-width="2.4" fill="none"/></svg>
<div style="position:absolute;left:234px;top:172.5px;width:756px;height:518.3px;background:#9f9f9f;"></div>
<div style="position:absolute;left:234px;top:198.5px;width:756px;height:456px;box-sizing:border-box;border:2px solid #fafafa;border-top-width:1.6px;border-right-width:1.6px;background:#9f9f9f;"></div>
<div style="position:absolute;left:234px;top:178.2px;width:62.80000000000001px;height:22px;background:linear-gradient(to bottom,#ffffff 0,#f4f4f4 50%,#e4e6e8 100%);border-radius:2px 2px 0 0;"></div>
<span class="t" style="left:241.00px;top:183.29px;font-size:11px;color:#0c1a24;letter-spacing:-0.250px;">Просмотр</span>
<div style="position:absolute;left:297.6px;top:180px;width:71.39999999999998px;height:18.6px;box-sizing:border-box;border:1.5px solid #f4f4f4;border-bottom:none;background:linear-gradient(to bottom,#cfcfcf 0,#d9d9d9 50%,#e6e6e6 100%);"></div>
<span class="t" style="left:301.00px;top:183.29px;font-size:11px;color:#0c1a24;letter-spacing:0.160px;">Миниатюры</span>
<div style="position:absolute;left:370px;top:180px;width:40.5px;height:18.6px;box-sizing:border-box;border:1.5px solid #f4f4f4;border-bottom:none;background:linear-gradient(to bottom,#cfcfcf 0,#d9d9d9 50%,#e6e6e6 100%);"></div>
<span class="t" style="left:373.50px;top:183.29px;font-size:11px;color:#0c1a24;letter-spacing:0.359px;">Лупа</span>
<div style="position:absolute;left:412px;top:180px;width:40px;height:18.6px;box-sizing:border-box;border:1.5px solid #f4f4f4;border-bottom:none;background:linear-gradient(to bottom,#cfcfcf 0,#d9d9d9 50%,#e6e6e6 100%);"></div>
<span class="t" style="left:416.50px;top:183.29px;font-size:11px;color:#0c1a24;letter-spacing:-1.200px;">JPEG</span>
<div style="position:absolute;left:453.5px;top:180px;width:40.5px;height:18.6px;box-sizing:border-box;border:1.5px solid #f4f4f4;border-bottom:none;background:linear-gradient(to bottom,#cfcfcf 0,#d9d9d9 50%,#e6e6e6 100%);"></div>
<span class="t" style="left:457.50px;top:183.29px;font-size:11px;color:#0c1a24;letter-spacing:-0.008px;">Raw</span>
<div style="position:absolute;left:495.5px;top:180px;width:40.5px;height:18.6px;box-sizing:border-box;border:1.5px solid #f4f4f4;border-bottom:none;background:linear-gradient(to bottom,#cfcfcf 0,#d9d9d9 50%,#e6e6e6 100%);"></div>
<span class="t" style="left:499.50px;top:183.29px;font-size:11px;color:#0c1a24;letter-spacing:-0.035px;">Видео</span>
<div style="position:absolute;left:538px;top:180px;width:92.5px;height:18.6px;box-sizing:border-box;border:1.5px solid #f4f4f4;border-bottom:none;background:linear-gradient(to bottom,#cfcfcf 0,#d9d9d9 50%,#e6e6e6 100%);"></div>
<span class="t" style="left:543.30px;top:183.29px;font-size:11px;color:#0c1a24;letter-spacing:-0.062px;">Второй монитор</span>
<div style="position:absolute;left:632px;top:180px;width:40.5px;height:18.6px;box-sizing:border-box;border:1.5px solid #f4f4f4;border-bottom:none;background:linear-gradient(to bottom,#cfcfcf 0,#d9d9d9 50%,#e6e6e6 100%);"></div>
<span class="t" style="left:636.00px;top:183.29px;font-size:11px;color:#0c1a24;letter-spacing:-1.200px;">CMS</span>
<div style="position:absolute;left:674.5px;top:180px;width:68.5px;height:18.6px;box-sizing:border-box;border:1.5px solid #f4f4f4;border-bottom:none;background:linear-gradient(to bottom,#cfcfcf 0,#d9d9d9 50%,#e6e6e6 100%);"></div>
<span class="t" style="left:678.30px;top:183.29px;font-size:11px;color:#0c1a24;letter-spacing:-0.282px;">Ассоциации</span>
<div style="position:absolute;left:745px;top:180px;width:63.799999999999955px;height:18.6px;box-sizing:border-box;border:1.5px solid #f4f4f4;border-bottom:none;background:linear-gradient(to bottom,#cfcfcf 0,#d9d9d9 50%,#e6e6e6 100%);"></div>
<span class="t" style="left:749.00px;top:183.29px;font-size:11px;color:#0c1a24;letter-spacing:-0.156px;">Избранное</span>
<div style="position:absolute;left:810.8px;top:180px;width:66.20000000000005px;height:18.6px;box-sizing:border-box;border:1.5px solid #f4f4f4;border-bottom:none;background:linear-gradient(to bottom,#cfcfcf 0,#d9d9d9 50%,#e6e6e6 100%);"></div>
<span class="t" style="left:815.00px;top:183.29px;font-size:11px;color:#0c1a24;letter-spacing:-0.365px;">Программы</span>
<div style="position:absolute;left:878.8px;top:180px;width:50.200000000000045px;height:18.6px;box-sizing:border-box;border:1.5px solid #f4f4f4;border-bottom:none;background:linear-gradient(to bottom,#cfcfcf 0,#d9d9d9 50%,#e6e6e6 100%);"></div>
<span class="t" style="left:882.70px;top:183.29px;font-size:11px;color:#0c1a24;letter-spacing:0.176px;">Музыка</span>
<span class="t" style="left:248.00px;top:220.09px;font-size:11px;color:#163640;letter-spacing:-0.053px;">Начальная папка:</span>
<div style="position:absolute;left:390.5px;top:218.5px;width:183px;height:19.6px;box-sizing:border-box;border:1px solid #e6e6e6;background:linear-gradient(to bottom,#fbfbfb 0,#f0f0f0 45%,#dcdcdc 55%,#d2d2d2 100%);box-shadow:inset 0 0 0 1px #bdbdbd;border-radius:1px;"></div><svg style="position:absolute;left:559.0px;top:226.1px;" width="8" height="5" viewBox="0 0 8 5"><path d="M.8 .8 L3.8 3.8 L6.8 .8" fill="none" stroke="#a2a2a2" stroke-width="1.6"/></svg><span class="t" style="left:393.80px;top:221.49px;font-size:11px;color:#0f2a3c;letter-spacing:-0.016px;">последняя использованная</span>
<div style="position:absolute;left:591.2px;top:220.2px;width:12.5px;height:12.5px;box-sizing:border-box;border:1px solid #3a7a86;background:linear-gradient(135deg,#cfcfcf 0,#f0f0f0 60%,#fafafa 100%);"></div>
<span class="t" style="left:606.00px;top:219.69px;font-size:11px;color:#163640;letter-spacing:-0.150px;">Помнить последний просмотренный файл</span>
<span class="t" style="left:248.00px;top:253.09px;font-size:11px;color:#163640;letter-spacing:0.033px;">Фон обычного просмотра:</span>
<div style="position:absolute;left:391px;top:249.5px;width:182.5px;height:21px;box-sizing:border-box;border:1px solid #f0f0f0;background:#000;"></div>
<span class="t" style="left:602.50px;top:253.09px;font-size:11px;color:#163640;letter-spacing:0.009px;">Фон полноэкранного режима:</span>
<div style="position:absolute;left:758px;top:249.5px;width:221.5px;height:21px;box-sizing:border-box;border:1px solid #f0f0f0;background:#000;"></div>
<span class="t" style="left:632.00px;top:283.59px;font-size:11px;color:#163640;letter-spacing:-0.020px;">Цвет для имён файлов:</span>
<div style="position:absolute;left:758px;top:279px;width:69.5px;height:21.5px;box-sizing:border-box;border:1px solid #c8f4c8;background:#00ff00;"></div>
<span class="t" style="left:867.00px;top:283.59px;font-size:11px;color:#163640;letter-spacing:-0.292px;">Позиция:</span>
<div style="position:absolute;left:915px;top:280px;width:64px;height:19.6px;box-sizing:border-box;border:1px solid #e6e6e6;background:linear-gradient(to bottom,#fbfbfb 0,#f0f0f0 45%,#dcdcdc 55%,#d2d2d2 100%);box-shadow:inset 0 0 0 1px #bdbdbd;border-radius:1px;"></div><svg style="position:absolute;left:964.5px;top:287.6px;" width="8" height="5" viewBox="0 0 8 5"><path d="M.8 .8 L3.8 3.8 L6.8 .8" fill="none" stroke="#a2a2a2" stroke-width="1.6"/></svg><span class="t" style="left:918.30px;top:282.99px;font-size:11px;color:#0f2a3c;letter-spacing:0.403px;">вверху</span>
<div style="position:absolute;left:527px;top:284.5px;width:12.5px;height:12.5px;box-sizing:border-box;border:1px solid #3a7a86;background:linear-gradient(135deg,#cfcfcf 0,#f0f0f0 60%,#fafafa 100%);"></div>
<span class="t" style="left:542.30px;top:284.09px;font-size:11px;color:#163640;letter-spacing:0.031px;">Жирный</span>
<div style="position:absolute;left:248px;top:284.5px;width:12.5px;height:12.5px;box-sizing:border-box;border:1px solid #2a6876;background:linear-gradient(135deg,#d6eaee 0,#f6fcfc 100%);"></div><svg style="position:absolute;left:248px;top:284.5px;" width="12.5" height="12.5" viewBox="0 0 12.5 12.5"><path d="M3.2 3.4 L9.3 9.3 M9.3 3.4 L3.2 9.3" stroke="#12697e" stroke-width="1.9" fill="none"/></svg>
<span class="t" style="left:263.30px;top:284.19px;font-size:11px;color:#163640;letter-spacing:-0.093px;">Имя файла на полном экране: текст</span>
<div style="position:absolute;left:248px;top:311.42px;width:12.5px;height:12.5px;box-sizing:border-box;border:1px solid #3a7a86;background:linear-gradient(135deg,#cfcfcf 0,#f0f0f0 60%,#fafafa 100%);"></div>
<span class="t" style="left:263.30px;top:311.11px;font-size:11px;color:#163640;letter-spacing:-0.190px;">Имя файла на полном экране: фон</span>
<div style="position:absolute;left:248px;top:338.34000000000003px;width:12.5px;height:12.5px;box-sizing:border-box;border:1px solid #3a7a86;background:linear-gradient(135deg,#cfcfcf 0,#f0f0f0 60%,#fafafa 100%);"></div>
<span class="t" style="left:263.30px;top:338.03px;font-size:11px;color:#163640;letter-spacing:0.006px;">Циклический просмотр</span>
<div style="position:absolute;left:248px;top:365.26px;width:12.5px;height:12.5px;box-sizing:border-box;border:1px solid #2a6876;background:linear-gradient(135deg,#d6eaee 0,#f6fcfc 100%);"></div><svg style="position:absolute;left:248px;top:365.26px;" width="12.5" height="12.5" viewBox="0 0 12.5 12.5"><path d="M3.2 3.4 L9.3 9.3 M9.3 3.4 L3.2 9.3" stroke="#12697e" stroke-width="1.9" fill="none"/></svg>
<span class="t" style="left:263.30px;top:364.95px;font-size:11px;color:#163640;letter-spacing:0.026px;">Сглаживание</span>
<div style="position:absolute;left:248px;top:392.18px;width:12.5px;height:12.5px;box-sizing:border-box;border:1px solid #2a6876;background:linear-gradient(135deg,#d6eaee 0,#f6fcfc 100%);"></div><svg style="position:absolute;left:248px;top:392.18px;" width="12.5" height="12.5" viewBox="0 0 12.5 12.5"><path d="M3.2 3.4 L9.3 9.3 M9.3 3.4 L3.2 9.3" stroke="#12697e" stroke-width="1.9" fill="none"/></svg>
<span class="t" style="left:263.30px;top:391.87px;font-size:11px;color:#163640;letter-spacing:0.054px;">Подтверждать выход по ESC</span>
<div style="position:absolute;left:248px;top:419.1px;width:12.5px;height:12.5px;box-sizing:border-box;border:1px solid #2a6876;background:linear-gradient(135deg,#d6eaee 0,#f6fcfc 100%);"></div><svg style="position:absolute;left:248px;top:419.1px;" width="12.5" height="12.5" viewBox="0 0 12.5 12.5"><path d="M3.2 3.4 L9.3 9.3 M9.3 3.4 L3.2 9.3" stroke="#12697e" stroke-width="1.9" fill="none"/></svg>
<span class="t" style="left:263.30px;top:418.79px;font-size:11px;color:#163640;letter-spacing:0.038px;">Подтверждать перезапись файлов</span>
<div style="position:absolute;left:248px;top:446.02px;width:12.5px;height:12.5px;box-sizing:border-box;border:1px solid #2a6876;background:linear-gradient(135deg,#d6eaee 0,#f6fcfc 100%);"></div><svg style="position:absolute;left:248px;top:446.02px;" width="12.5" height="12.5" viewBox="0 0 12.5 12.5"><path d="M3.2 3.4 L9.3 9.3 M9.3 3.4 L3.2 9.3" stroke="#12697e" stroke-width="1.9" fill="none"/></svg>
<span class="t" style="left:263.30px;top:445.71px;font-size:11px;color:#163640;letter-spacing:-0.156px;">Напоминать о сохранении изменений</span>
<div style="position:absolute;left:248px;top:472.94px;width:12.5px;height:12.5px;box-sizing:border-box;border:1px solid #3a7a86;background:linear-gradient(135deg,#cfcfcf 0,#f0f0f0 60%,#fafafa 100%);"></div>
<span class="t" style="left:263.30px;top:472.63px;font-size:11px;color:#163640;letter-spacing:0.078px;">Показывать скрытые файлы и папки</span>
<div style="position:absolute;left:248px;top:499.86px;width:12.5px;height:12.5px;box-sizing:border-box;border:1px solid #2a6876;background:linear-gradient(135deg,#d6eaee 0,#f6fcfc 100%);"></div><svg style="position:absolute;left:248px;top:499.86px;" width="12.5" height="12.5" viewBox="0 0 12.5 12.5"><path d="M3.2 3.4 L9.3 9.3 M9.3 3.4 L3.2 9.3" stroke="#12697e" stroke-width="1.9" fill="none"/></svg>
<span class="t" style="left:263.30px;top:499.55px;font-size:11px;color:#163640;letter-spacing:0.066px;">Автоповорот по тегу ориентации в EXIF</span>
<div style="position:absolute;left:248px;top:526.78px;width:12.5px;height:12.5px;box-sizing:border-box;border:1px solid #2a6876;background:linear-gradient(135deg,#d6eaee 0,#f6fcfc 100%);"></div><svg style="position:absolute;left:248px;top:526.78px;" width="12.5" height="12.5" viewBox="0 0 12.5 12.5"><path d="M3.2 3.4 L9.3 9.3 M9.3 3.4 L3.2 9.3" stroke="#12697e" stroke-width="1.9" fill="none"/></svg>
<span class="t" style="left:263.30px;top:526.47px;font-size:11px;color:#163640;letter-spacing:0.094px;">Автозагрузка следующего файла при обрезке</span>
<div style="position:absolute;left:248px;top:553.7px;width:12.5px;height:12.5px;box-sizing:border-box;border:1px solid #3a7a86;background:linear-gradient(135deg,#cfcfcf 0,#f0f0f0 60%,#fafafa 100%);"></div>
<span class="t" style="left:263.30px;top:553.39px;font-size:11px;color:#163640;letter-spacing:-0.026px;">Не показывать &quot;песочные часы&quot; на полном экране</span>
<div style="position:absolute;left:248px;top:580.62px;width:12.5px;height:12.5px;box-sizing:border-box;border:1px solid #2a6876;background:linear-gradient(135deg,#d6eaee 0,#f6fcfc 100%);"></div><svg style="position:absolute;left:248px;top:580.62px;" width="12.5" height="12.5" viewBox="0 0 12.5 12.5"><path d="M3.2 3.4 L9.3 9.3 M9.3 3.4 L3.2 9.3" stroke="#12697e" stroke-width="1.9" fill="none"/></svg>
<span class="t" style="left:263.30px;top:580.31px;font-size:11px;color:#163640;letter-spacing:-0.056px;">Скрывать курсор мыши на полном экране</span>
<div style="position:absolute;left:248px;top:607.54px;width:12.5px;height:12.5px;box-sizing:border-box;border:1px solid #3a7a86;background:linear-gradient(135deg,#cfcfcf 0,#f0f0f0 60%,#fafafa 100%);"></div>
<span class="t" style="left:263.30px;top:607.23px;font-size:11px;color:#163640;letter-spacing:-0.031px;">Показывать панель задач Windows на полном экране</span>
<div style="position:absolute;left:248px;top:634.46px;width:12.5px;height:12.5px;box-sizing:border-box;border:1px solid #2a6876;background:linear-gradient(135deg,#d6eaee 0,#f6fcfc 100%);"></div><svg style="position:absolute;left:248px;top:634.46px;" width="12.5" height="12.5" viewBox="0 0 12.5 12.5"><path d="M3.2 3.4 L9.3 9.3 M9.3 3.4 L3.2 9.3" stroke="#12697e" stroke-width="1.9" fill="none"/></svg>
<span class="t" style="left:263.30px;top:634.15px;font-size:11px;color:#163640;">Сброс позиции в (0,0) при загрузке изображений</span>
<div style="position:absolute;left:386.2px;top:338.34000000000003px;width:12.5px;height:12.5px;box-sizing:border-box;border:1px solid #3a7a86;background:linear-gradient(135deg,#cfcfcf 0,#f0f0f0 60%,#fafafa 100%);"></div>
<span class="t" style="left:401.50px;top:338.03px;font-size:11px;color:#163640;letter-spacing:0.008px;">Автосмена папки</span>
<span class="t" style="left:343.70px;top:363.69px;font-size:11px;color:#163640;letter-spacing:-0.036px;">Фильтр:</span>
<div style="position:absolute;left:386px;top:360.5px;width:132.5px;height:20px;box-sizing:border-box;border:1px solid #e6e6e6;background:linear-gradient(to bottom,#fbfbfb 0,#f0f0f0 45%,#dcdcdc 55%,#d2d2d2 100%);box-shadow:inset 0 0 0 1px #bdbdbd;border-radius:1px;"></div><svg style="position:absolute;left:504.0px;top:368.1px;" width="8" height="5" viewBox="0 0 8 5"><path d="M.8 .8 L3.8 3.8 L6.8 .8" fill="none" stroke="#a2a2a2" stroke-width="1.6"/></svg><span class="t" style="left:389.30px;top:363.49px;font-size:11px;color:#0f2a3c;letter-spacing:-0.070px;">BiFant (Fastest)</span>
<span class="t" style="left:559.00px;top:340.29px;font-size:11px;color:#163640;letter-spacing:0.071px;">Открывать ассоциированные файлы:</span>
<div style="position:absolute;left:758px;top:337.4px;width:220.6px;height:20.2px;box-sizing:border-box;border:1px solid #e6e6e6;background:linear-gradient(to bottom,#fbfbfb 0,#f0f0f0 45%,#dcdcdc 55%,#d2d2d2 100%);box-shadow:inset 0 0 0 1px #bdbdbd;border-radius:1px;"></div><svg style="position:absolute;left:964.1px;top:345.0px;" width="8" height="5" viewBox="0 0 8 5"><path d="M.8 .8 L3.8 3.8 L6.8 .8" fill="none" stroke="#a2a2a2" stroke-width="1.6"/></svg><span class="t" style="left:761.30px;top:340.39px;font-size:11px;color:#0f2a3c;letter-spacing:-0.142px;">в полноэкранном режиме</span>
<span class="t" style="left:585.00px;top:369.29px;font-size:11px;color:#163640;letter-spacing:-0.048px;">Масштабирование изображений:</span>
<div style="position:absolute;left:758px;top:366.4px;width:220.6px;height:20.2px;box-sizing:border-box;border:1px solid #e6e6e6;background:linear-gradient(to bottom,#fbfbfb 0,#f0f0f0 45%,#dcdcdc 55%,#d2d2d2 100%);box-shadow:inset 0 0 0 1px #bdbdbd;border-radius:1px;"></div><svg style="position:absolute;left:964.1px;top:374.0px;" width="8" height="5" viewBox="0 0 8 5"><path d="M.8 .8 L3.8 3.8 L6.8 .8" fill="none" stroke="#a2a2a2" stroke-width="1.6"/></svg><span class="t" style="left:761.30px;top:369.39px;font-size:11px;color:#0f2a3c;letter-spacing:0.040px;">авторазмер (только большие)</span>
<span class="t" style="left:578.30px;top:398.29px;font-size:11px;color:#163640;letter-spacing:0.024px;">Стандартный вид режима обзора:</span>
<div style="position:absolute;left:758px;top:395.4px;width:220.6px;height:20.2px;box-sizing:border-box;border:1px solid #e6e6e6;background:linear-gradient(to bottom,#fbfbfb 0,#f0f0f0 45%,#dcdcdc 55%,#d2d2d2 100%);box-shadow:inset 0 0 0 1px #bdbdbd;border-radius:1px;"></div><svg style="position:absolute;left:964.1px;top:403.0px;" width="8" height="5" viewBox="0 0 8 5"><path d="M.8 .8 L3.8 3.8 L6.8 .8" fill="none" stroke="#a2a2a2" stroke-width="1.6"/></svg><span class="t" style="left:761.30px;top:398.39px;font-size:11px;color:#0f2a3c;letter-spacing:0.009px;">миниатюры</span>
<span class="t" style="left:629.50px;top:427.29px;font-size:11px;color:#163640;letter-spacing:-0.070px;">Единицы по умолчанию:</span>
<div style="position:absolute;left:758px;top:424.4px;width:220.6px;height:20.2px;box-sizing:border-box;border:1px solid #e6e6e6;background:linear-gradient(to bottom,#fbfbfb 0,#f0f0f0 45%,#dcdcdc 55%,#d2d2d2 100%);box-shadow:inset 0 0 0 1px #bdbdbd;border-radius:1px;"></div><svg style="position:absolute;left:964.1px;top:432.0px;" width="8" height="5" viewBox="0 0 8 5"><path d="M.8 .8 L3.8 3.8 L6.8 .8" fill="none" stroke="#a2a2a2" stroke-width="1.6"/></svg><span class="t" style="left:761.30px;top:427.39px;font-size:11px;color:#0f2a3c;letter-spacing:-0.097px;">дюйм</span>
<span class="t" style="left:659.00px;top:456.29px;font-size:11px;color:#163640;letter-spacing:0.106px;">Клавиши-стрелки:</span>
<div style="position:absolute;left:758px;top:453.4px;width:220.6px;height:20.2px;box-sizing:border-box;border:1px solid #e6e6e6;background:linear-gradient(to bottom,#fbfbfb 0,#f0f0f0 45%,#dcdcdc 55%,#d2d2d2 100%);box-shadow:inset 0 0 0 1px #bdbdbd;border-radius:1px;"></div><svg style="position:absolute;left:964.1px;top:461.0px;" width="8" height="5" viewBox="0 0 8 5"><path d="M.8 .8 L3.8 3.8 L6.8 .8" fill="none" stroke="#a2a2a2" stroke-width="1.6"/></svg><span class="t" style="left:761.30px;top:456.39px;font-size:11px;color:#0f2a3c;letter-spacing:0.560px;">прокрутка</span>
<span class="t" style="left:687.50px;top:485.29px;font-size:11px;color:#163640;letter-spacing:-0.116px;">Ролик мыши:</span>
<div style="position:absolute;left:758px;top:482.4px;width:220.6px;height:20.2px;box-sizing:border-box;border:1px solid #e6e6e6;background:linear-gradient(to bottom,#fbfbfb 0,#f0f0f0 45%,#dcdcdc 55%,#d2d2d2 100%);box-shadow:inset 0 0 0 1px #bdbdbd;border-radius:1px;"></div><svg style="position:absolute;left:964.1px;top:490.0px;" width="8" height="5" viewBox="0 0 8 5"><path d="M.8 .8 L3.8 3.8 L6.8 .8" fill="none" stroke="#a2a2a2" stroke-width="1.6"/></svg><span class="t" style="left:761.30px;top:485.39px;font-size:11px;color:#0f2a3c;letter-spacing:0.192px;">предыдущее/следующее</span>
<span class="t" style="left:677.50px;top:514.29px;font-size:11px;color:#163640;">Щелчок мыши:</span>
<div style="position:absolute;left:758px;top:511.4px;width:220.6px;height:20.2px;box-sizing:border-box;border:1px solid #e6e6e6;background:linear-gradient(to bottom,#fbfbfb 0,#f0f0f0 45%,#dcdcdc 55%,#d2d2d2 100%);box-shadow:inset 0 0 0 1px #bdbdbd;border-radius:1px;"></div><svg style="position:absolute;left:964.1px;top:519.0px;" width="8" height="5" viewBox="0 0 8 5"><path d="M.8 .8 L3.8 3.8 L6.8 .8" fill="none" stroke="#a2a2a2" stroke-width="1.6"/></svg><span class="t" style="left:761.30px;top:514.39px;font-size:11px;color:#0f2a3c;letter-spacing:0.031px;">лупа + Масштаб</span>
<span class="t" style="left:655.00px;top:543.29px;font-size:11px;color:#163640;letter-spacing:-0.046px;">Масштабирование:</span>
<div style="position:absolute;left:758px;top:540.4px;width:220.6px;height:20.2px;box-sizing:border-box;border:1px solid #e6e6e6;background:linear-gradient(to bottom,#fbfbfb 0,#f0f0f0 45%,#dcdcdc 55%,#d2d2d2 100%);box-shadow:inset 0 0 0 1px #bdbdbd;border-radius:1px;"></div><svg style="position:absolute;left:964.1px;top:548.0px;" width="8" height="5" viewBox="0 0 8 5"><path d="M.8 .8 L3.8 3.8 L6.8 .8" fill="none" stroke="#a2a2a2" stroke-width="1.6"/></svg><span class="t" style="left:761.30px;top:543.39px;font-size:11px;color:#0f2a3c;letter-spacing:0.182px;">по центру</span>
<span class="t" style="left:572.50px;top:572.29px;font-size:11px;color:#163640;letter-spacing:0.081px;">Перетаскивание файлов в дереве:</span>
<div style="position:absolute;left:758px;top:569.4px;width:220.6px;height:20.2px;box-sizing:border-box;border:1px solid #e6e6e6;background:linear-gradient(to bottom,#fbfbfb 0,#f0f0f0 45%,#dcdcdc 55%,#d2d2d2 100%);box-shadow:inset 0 0 0 1px #bdbdbd;border-radius:1px;"></div><svg style="position:absolute;left:964.1px;top:577.0px;" width="8" height="5" viewBox="0 0 8 5"><path d="M.8 .8 L3.8 3.8 L6.8 .8" fill="none" stroke="#a2a2a2" stroke-width="1.6"/></svg><span class="t" style="left:761.30px;top:572.39px;font-size:11px;color:#0f2a3c;letter-spacing:-0.013px;">перемещать, если на том же диске</span>
<span class="t" style="left:649.70px;top:601.29px;font-size:11px;color:#163640;letter-spacing:-0.081px;">Один файл удалять:</span>
<div style="position:absolute;left:758px;top:598.4px;width:220.6px;height:20.2px;box-sizing:border-box;border:1px solid #e6e6e6;background:linear-gradient(to bottom,#fbfbfb 0,#f0f0f0 45%,#dcdcdc 55%,#d2d2d2 100%);box-shadow:inset 0 0 0 1px #bdbdbd;border-radius:1px;"></div><svg style="position:absolute;left:964.1px;top:606.0px;" width="8" height="5" viewBox="0 0 8 5"><path d="M.8 .8 L3.8 3.8 L6.8 .8" fill="none" stroke="#a2a2a2" stroke-width="1.6"/></svg><span class="t" style="left:761.30px;top:601.39px;font-size:11px;color:#0f2a3c;letter-spacing:0.160px;">в корзину, с подтверждением</span>
<span class="t" style="left:661.10px;top:630.29px;font-size:11px;color:#163640;letter-spacing:-0.071px;">Сенсорный экран:</span>
<div style="position:absolute;left:758px;top:627.4px;width:220.6px;height:20.2px;box-sizing:border-box;border:1px solid #e6e6e6;background:linear-gradient(to bottom,#fbfbfb 0,#f0f0f0 45%,#dcdcdc 55%,#d2d2d2 100%);box-shadow:inset 0 0 0 1px #bdbdbd;border-radius:1px;"></div><svg style="position:absolute;left:964.1px;top:635.0px;" width="8" height="5" viewBox="0 0 8 5"><path d="M.8 .8 L3.8 3.8 L6.8 .8" fill="none" stroke="#a2a2a2" stroke-width="1.6"/></svg><span class="t" style="left:761.30px;top:630.39px;font-size:11px;color:#0f2a3c;letter-spacing:-0.085px;">без эффекта</span>
<div style="position:absolute;left:247px;top:661.2px;width:87.8px;height:23px;box-sizing:border-box;border:1px solid #bcbcbc;border-radius:4px;background:linear-gradient(to bottom,#ffffff 0,#f0f0f0 45%,#dedede 55%,#d6d6d6 100%);box-shadow:0 0 0 1.2px #dcdcdc;"></div><span class="t" style="left:275.30px;top:665.99px;font-size:11px;color:#10222c;letter-spacing:-0.296px;">Сброс</span>
<div style="position:absolute;left:786.6px;top:661.2px;width:86.8px;height:23px;box-sizing:border-box;border:1.6px solid #127a96;border-radius:4px;background:linear-gradient(to bottom,#ffffff 0,#eef4f6 45%,#dbe4e8 55%,#d4dcdf 100%);box-shadow:0 0 0 1px #cfe6ee;"></div><span class="t" style="left:822.30px;top:665.99px;font-size:11px;color:#10222c;letter-spacing:-1.006px;">OK</span>
<div style="position:absolute;left:891px;top:661.2px;width:87.8px;height:23px;box-sizing:border-box;border:1px solid #bcbcbc;border-radius:4px;background:linear-gradient(to bottom,#ffffff 0,#f0f0f0 45%,#dedede 55%,#d6d6d6 100%);box-shadow:0 0 0 1.2px #dcdcdc;"></div><span class="t" style="left:915.30px;top:665.99px;font-size:11px;color:#10222c;letter-spacing:-0.254px;">Отмена</span>
</body></html>
